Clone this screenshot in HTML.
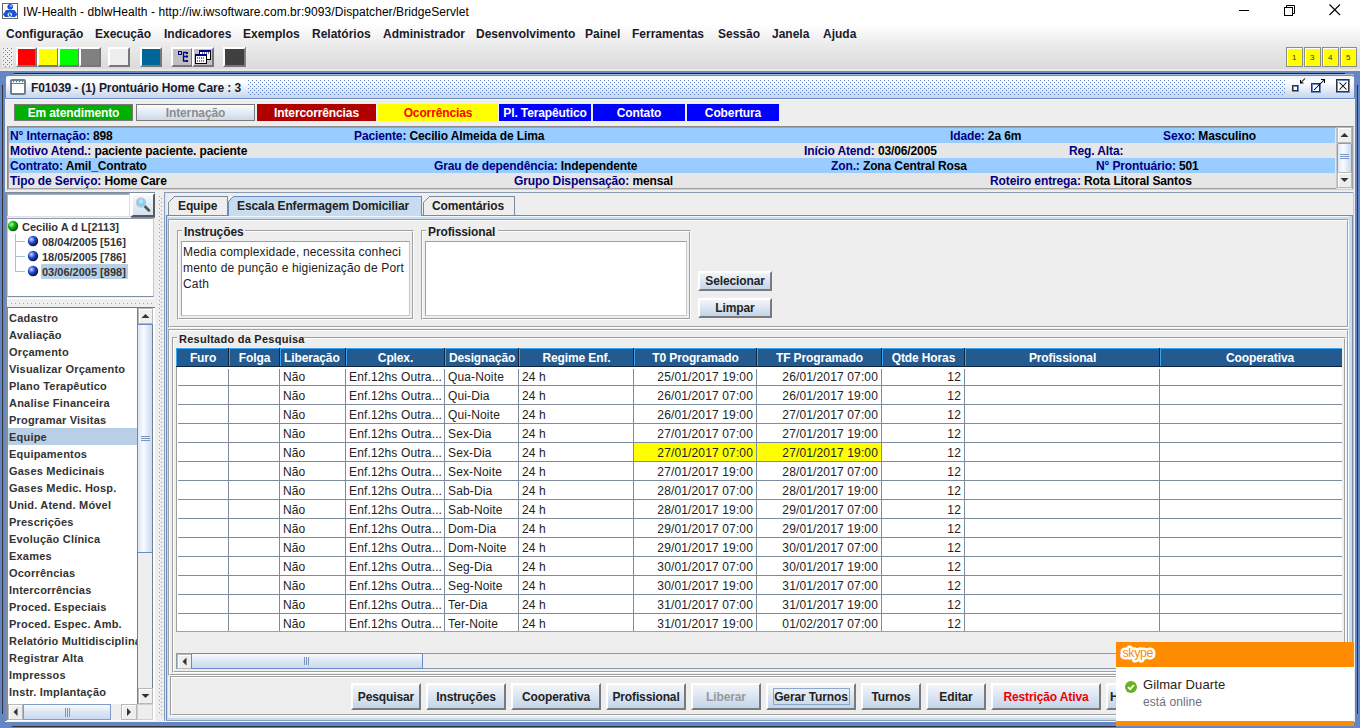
<!DOCTYPE html><html><head><meta charset="utf-8"><style>
*{box-sizing:border-box;margin:0;padding:0}
html,body{width:1360px;height:728px;overflow:hidden;background:#fff;font-family:"Liberation Sans", sans-serif;}
.a{position:absolute}
.t{position:absolute;white-space:pre;line-height:1}
.b{font-weight:bold}
</style></head><body><div class="a" style="left:0px;top:0px;width:1360px;height:22px;background:#fff"></div><svg class="a" style="left:0;top:0" width="22" height="22" viewBox="0 0 22 22">
<rect x="2.5" y="3.5" width="15" height="15" fill="#fff" stroke="#666" stroke-width="1"/>
<circle cx="10.2" cy="6.7" r="2.8" fill="#1a4fd0"/><circle cx="11" cy="6" r="1" fill="#9cd0ff"/>
<path d="M6 10 H14.5 L17.5 14.5 L15 17 H5 L3 14.5 Z" fill="#1f52d6"/>
<circle cx="9.8" cy="14.6" r="2.2" fill="#fff"/><path d="M9.5 13 V15.2 H11" stroke="#0a9a20" stroke-width="1.4" fill="none"/>
</svg><div class="t" style="left:23px;top:6px;font-size:12px;color:#000;letter-spacing:0.065px">IW-Health - dblwHealth - http://iw.iwsoftware.com.br:9093/Dispatcher/BridgeServlet</div><div class="a" style="left:1239px;top:10px;width:10px;height:1px;background:#000"></div><svg class="a" style="left:1283px;top:4px" width="13" height="12" viewBox="0 0 13 12">
<rect x="1.5" y="3.5" width="8" height="8" fill="none" stroke="#000"/>
<path d="M3.5 3.5 V1.5 H11.5 V9.5 H9.5" fill="none" stroke="#000"/></svg><svg class="a" style="left:1329px;top:4px" width="12" height="12" viewBox="0 0 12 12">
<path d="M0.5 0.5 L11 11 M11 0.5 L0.5 11" stroke="#000" stroke-width="1.1"/></svg><div class="a" style="left:0px;top:22px;width:1360px;height:48px;background:linear-gradient(#ffffff 0%,#ffffff 6%,#f6f6f6 25%,#ececec 45%,#e2e2e2 75%,#dadada 100%)"></div><div class="a" style="left:0px;top:69px;width:1360px;height:2px;background:#ece9e2"></div><div class="t b" style="left:6px;top:28px;font-size:12px;color:#1a1a2a;">Configuração</div><div class="t b" style="left:95px;top:28px;font-size:12px;color:#1a1a2a;">Execução</div><div class="t b" style="left:164px;top:28px;font-size:12px;color:#1a1a2a;">Indicadores</div><div class="t b" style="left:243px;top:28px;font-size:12px;color:#1a1a2a;">Exemplos</div><div class="t b" style="left:312px;top:28px;font-size:12px;color:#1a1a2a;">Relatórios</div><div class="t b" style="left:383px;top:28px;font-size:12px;color:#1a1a2a;">Administrador</div><div class="t b" style="left:476px;top:28px;font-size:12px;color:#1a1a2a;">Desenvolvimento</div><div class="t b" style="left:585px;top:28px;font-size:12px;color:#1a1a2a;">Painel</div><div class="t b" style="left:632px;top:28px;font-size:12px;color:#1a1a2a;">Ferramentas</div><div class="t b" style="left:718px;top:28px;font-size:12px;color:#1a1a2a;">Sessão</div><div class="t b" style="left:772px;top:28px;font-size:12px;color:#1a1a2a;">Janela</div><div class="t b" style="left:823px;top:28px;font-size:12px;color:#1a1a2a;">Ajuda</div><svg class="a" style="left:0;top:0" width="14" height="70" shape-rendering="crispEdges"><rect x="2" y="47" width="11" height="20" fill="#f4f4f4" opacity="0.6"/><rect x="3" y="48" width="1" height="1" fill="#6f7f8f"/><rect x="7" y="48" width="1" height="1" fill="#6f7f8f"/><rect x="11" y="48" width="1" height="1" fill="#6f7f8f"/><rect x="5" y="50" width="1" height="1" fill="#6f7f8f"/><rect x="9" y="50" width="1" height="1" fill="#6f7f8f"/><rect x="3" y="52" width="1" height="1" fill="#6f7f8f"/><rect x="7" y="52" width="1" height="1" fill="#6f7f8f"/><rect x="11" y="52" width="1" height="1" fill="#6f7f8f"/><rect x="5" y="54" width="1" height="1" fill="#6f7f8f"/><rect x="9" y="54" width="1" height="1" fill="#6f7f8f"/><rect x="3" y="56" width="1" height="1" fill="#6f7f8f"/><rect x="7" y="56" width="1" height="1" fill="#6f7f8f"/><rect x="11" y="56" width="1" height="1" fill="#6f7f8f"/><rect x="5" y="58" width="1" height="1" fill="#6f7f8f"/><rect x="9" y="58" width="1" height="1" fill="#6f7f8f"/><rect x="3" y="60" width="1" height="1" fill="#6f7f8f"/><rect x="7" y="60" width="1" height="1" fill="#6f7f8f"/><rect x="11" y="60" width="1" height="1" fill="#6f7f8f"/><rect x="5" y="62" width="1" height="1" fill="#6f7f8f"/><rect x="9" y="62" width="1" height="1" fill="#6f7f8f"/><rect x="3" y="64" width="1" height="1" fill="#6f7f8f"/><rect x="7" y="64" width="1" height="1" fill="#6f7f8f"/><rect x="11" y="64" width="1" height="1" fill="#6f7f8f"/><rect x="5" y="66" width="1" height="1" fill="#6f7f8f"/><rect x="9" y="66" width="1" height="1" fill="#6f7f8f"/></svg><div class="a" style="left:16px;top:47px;width:21px;height:20px;background:#ff0000;border-top:2px solid #fff;border-left:2px solid #fff;border-right:2px solid #777;border-bottom:2px solid #777"></div><div class="a" style="left:37px;top:47px;width:22px;height:20px;background:#ffff00;border-top:2px solid #fff;border-left:2px solid #fff;border-right:2px solid #777;border-bottom:2px solid #777"></div><div class="a" style="left:58px;top:47px;width:22px;height:20px;background:#00ff00;border-top:2px solid #fff;border-left:2px solid #fff;border-right:2px solid #777;border-bottom:2px solid #777"></div><div class="a" style="left:79px;top:47px;width:22px;height:20px;background:#808080;border-top:2px solid #fff;border-left:2px solid #fff;border-right:2px solid #777;border-bottom:2px solid #777"></div><div class="a" style="left:108px;top:47px;width:22px;height:20px;background:#eeeeee;border-top:2px solid #fff;border-left:2px solid #fff;border-right:2px solid #777;border-bottom:2px solid #777"></div><div class="a" style="left:140px;top:47px;width:22px;height:20px;background:#006699;border-top:2px solid #fff;border-left:2px solid #fff;border-right:2px solid #777;border-bottom:2px solid #777"></div><div class="a" style="left:171px;top:47px;width:22px;height:20px;background:#c0c0c0;border-top:2px solid #fff;border-left:2px solid #fff;border-right:2px solid #777;border-bottom:2px solid #777"></div><div class="a" style="left:192px;top:47px;width:22px;height:20px;background:#c0c0c0;border-top:2px solid #fff;border-left:2px solid #fff;border-right:2px solid #777;border-bottom:2px solid #777"></div><div class="a" style="left:223px;top:47px;width:23px;height:20px;background:#404040;border-top:2px solid #fff;border-left:2px solid #fff;border-right:2px solid #777;border-bottom:2px solid #777"></div><div class="a" style="left:245px;top:47px;width:1px;height:20px;background:#6a8ac5"></div><svg class="a" style="left:178px;top:51px" width="12" height="12" viewBox="0 0 12 12">
<rect x="0.5" y="0.5" width="3" height="3" fill="none" stroke="#000090"/>
<path d="M5 1.5 H9 M5.5 1.5 V10.5 M5 5.5 H9 M5 10 H9" stroke="#000090" stroke-width="1.3" fill="none"/>
<rect x="8" y="1" width="2" height="2" fill="#000090"/><rect x="8" y="4.5" width="2" height="2" fill="#000090"/><rect x="8" y="9" width="2" height="2" fill="#000090"/>
</svg><svg class="a" style="left:195px;top:50px" width="17" height="15" viewBox="0 0 17 15">
<rect x="4.5" y="0.5" width="11" height="9" fill="#fff" stroke="#000"/><rect x="4" y="0" width="12" height="2" fill="#000090"/>
<rect x="0.5" y="4.5" width="11" height="9" fill="#fff" stroke="#000"/><rect x="0" y="4" width="12" height="2" fill="#000090"/>
<path d="M2 8h1M4 8h1M6 8h1M8 8h1 M2 11h1M4 11h1M6 11h1M8 11h1 M7 3h1M9 3h1M11 3h1M13 3h1" stroke="#000"/>
</svg><div class="a" style="left:1286px;top:47px;width:17px;height:20px;background:#ffff00;border:1px solid #8c8c8c;box-shadow:inset 1px 1px 0 #fff"></div><div class="t" style="left:1292px;top:54px;font-size:8px;color:#333;">1</div><div class="a" style="left:1304px;top:47px;width:17px;height:20px;background:#ffff00;border:1px solid #8c8c8c;box-shadow:inset 1px 1px 0 #fff"></div><div class="t" style="left:1310px;top:54px;font-size:8px;color:#333;">3</div><div class="a" style="left:1322px;top:47px;width:17px;height:20px;background:#ffff00;border:1px solid #8c8c8c;box-shadow:inset 1px 1px 0 #fff"></div><div class="t" style="left:1328px;top:54px;font-size:8px;color:#333;">4</div><div class="a" style="left:1340px;top:47px;width:17px;height:20px;background:#ffff00;border:1px solid #8c8c8c;box-shadow:inset 1px 1px 0 #fff"></div><div class="t" style="left:1346px;top:54px;font-size:8px;color:#333;">5</div><div class="a" style="left:0px;top:71px;width:1360px;height:657px;background:#6586c4"></div><div class="a" style="left:14px;top:73px;width:1331px;height:1px;background:#222"></div><div class="a" style="left:14px;top:74px;width:1340px;height:1px;background:#a8bcd8"></div><div class="a" style="left:2px;top:85px;width:1px;height:629px;background:#333"></div><div class="a" style="left:1357px;top:85px;width:1px;height:629px;background:#333"></div><div class="a" style="left:5px;top:75px;width:1350px;height:24px;border-radius:3px 3px 0 0;background:#6a8ac5"></div><div class="a" style="left:6px;top:76px;width:1348px;height:22px;border-radius:2px 2px 0 0;background:linear-gradient(#eef3f9 0%,#ffffff 25%,#e4ecf6 60%,#c5d6ec 100%)"></div><svg class="a" style="left:10px;top:79px" width="17" height="17" viewBox="0 0 17 17">
<rect x="1" y="1" width="14" height="14" rx="1" fill="#fff" stroke="#6f7f90" stroke-width="2"/>
<path d="M2 4.5 H15" stroke="#6f7f90" stroke-width="1"/>
<path d="M3 2.6h1.2M6 2.6h1.2M9 2.6h1.2M12 2.6h1.2" stroke="#4a6fc0" stroke-width="1.2"/>
</svg><div class="t b" style="left:31px;top:82px;font-size:12px;color:#1a1a2a;letter-spacing:-0.11px">F01039 - (1) Prontuário Home Care : 3</div><svg class="a" style="left:0;top:0" width="1360" height="100" shape-rendering="crispEdges"><path d="M248 80h1v1h-1zM252 80h1v1h-1zM256 80h1v1h-1zM260 80h1v1h-1zM264 80h1v1h-1zM268 80h1v1h-1zM272 80h1v1h-1zM276 80h1v1h-1zM280 80h1v1h-1zM284 80h1v1h-1zM288 80h1v1h-1zM292 80h1v1h-1zM296 80h1v1h-1zM300 80h1v1h-1zM304 80h1v1h-1zM308 80h1v1h-1zM312 80h1v1h-1zM316 80h1v1h-1zM320 80h1v1h-1zM324 80h1v1h-1zM328 80h1v1h-1zM332 80h1v1h-1zM336 80h1v1h-1zM340 80h1v1h-1zM344 80h1v1h-1zM348 80h1v1h-1zM352 80h1v1h-1zM356 80h1v1h-1zM360 80h1v1h-1zM364 80h1v1h-1zM368 80h1v1h-1zM372 80h1v1h-1zM376 80h1v1h-1zM380 80h1v1h-1zM384 80h1v1h-1zM388 80h1v1h-1zM392 80h1v1h-1zM396 80h1v1h-1zM400 80h1v1h-1zM404 80h1v1h-1zM408 80h1v1h-1zM412 80h1v1h-1zM416 80h1v1h-1zM420 80h1v1h-1zM424 80h1v1h-1zM428 80h1v1h-1zM432 80h1v1h-1zM436 80h1v1h-1zM440 80h1v1h-1zM444 80h1v1h-1zM448 80h1v1h-1zM452 80h1v1h-1zM456 80h1v1h-1zM460 80h1v1h-1zM464 80h1v1h-1zM468 80h1v1h-1zM472 80h1v1h-1zM476 80h1v1h-1zM480 80h1v1h-1zM484 80h1v1h-1zM488 80h1v1h-1zM492 80h1v1h-1zM496 80h1v1h-1zM500 80h1v1h-1zM504 80h1v1h-1zM508 80h1v1h-1zM512 80h1v1h-1zM516 80h1v1h-1zM520 80h1v1h-1zM524 80h1v1h-1zM528 80h1v1h-1zM532 80h1v1h-1zM536 80h1v1h-1zM540 80h1v1h-1zM544 80h1v1h-1zM548 80h1v1h-1zM552 80h1v1h-1zM556 80h1v1h-1zM560 80h1v1h-1zM564 80h1v1h-1zM568 80h1v1h-1zM572 80h1v1h-1zM576 80h1v1h-1zM580 80h1v1h-1zM584 80h1v1h-1zM588 80h1v1h-1zM592 80h1v1h-1zM596 80h1v1h-1zM600 80h1v1h-1zM604 80h1v1h-1zM608 80h1v1h-1zM612 80h1v1h-1zM616 80h1v1h-1zM620 80h1v1h-1zM624 80h1v1h-1zM628 80h1v1h-1zM632 80h1v1h-1zM636 80h1v1h-1zM640 80h1v1h-1zM644 80h1v1h-1zM648 80h1v1h-1zM652 80h1v1h-1zM656 80h1v1h-1zM660 80h1v1h-1zM664 80h1v1h-1zM668 80h1v1h-1zM672 80h1v1h-1zM676 80h1v1h-1zM680 80h1v1h-1zM684 80h1v1h-1zM688 80h1v1h-1zM692 80h1v1h-1zM696 80h1v1h-1zM700 80h1v1h-1zM704 80h1v1h-1zM708 80h1v1h-1zM712 80h1v1h-1zM716 80h1v1h-1zM720 80h1v1h-1zM724 80h1v1h-1zM728 80h1v1h-1zM732 80h1v1h-1zM736 80h1v1h-1zM740 80h1v1h-1zM744 80h1v1h-1zM748 80h1v1h-1zM752 80h1v1h-1zM756 80h1v1h-1zM760 80h1v1h-1zM764 80h1v1h-1zM768 80h1v1h-1zM772 80h1v1h-1zM776 80h1v1h-1zM780 80h1v1h-1zM784 80h1v1h-1zM788 80h1v1h-1zM792 80h1v1h-1zM796 80h1v1h-1zM800 80h1v1h-1zM804 80h1v1h-1zM808 80h1v1h-1zM812 80h1v1h-1zM816 80h1v1h-1zM820 80h1v1h-1zM824 80h1v1h-1zM828 80h1v1h-1zM832 80h1v1h-1zM836 80h1v1h-1zM840 80h1v1h-1zM844 80h1v1h-1zM848 80h1v1h-1zM852 80h1v1h-1zM856 80h1v1h-1zM860 80h1v1h-1zM864 80h1v1h-1zM868 80h1v1h-1zM872 80h1v1h-1zM876 80h1v1h-1zM880 80h1v1h-1zM884 80h1v1h-1zM888 80h1v1h-1zM892 80h1v1h-1zM896 80h1v1h-1zM900 80h1v1h-1zM904 80h1v1h-1zM908 80h1v1h-1zM912 80h1v1h-1zM916 80h1v1h-1zM920 80h1v1h-1zM924 80h1v1h-1zM928 80h1v1h-1zM932 80h1v1h-1zM936 80h1v1h-1zM940 80h1v1h-1zM944 80h1v1h-1zM948 80h1v1h-1zM952 80h1v1h-1zM956 80h1v1h-1zM960 80h1v1h-1zM964 80h1v1h-1zM968 80h1v1h-1zM972 80h1v1h-1zM976 80h1v1h-1zM980 80h1v1h-1zM984 80h1v1h-1zM988 80h1v1h-1zM992 80h1v1h-1zM996 80h1v1h-1zM1000 80h1v1h-1zM1004 80h1v1h-1zM1008 80h1v1h-1zM1012 80h1v1h-1zM1016 80h1v1h-1zM1020 80h1v1h-1zM1024 80h1v1h-1zM1028 80h1v1h-1zM1032 80h1v1h-1zM1036 80h1v1h-1zM1040 80h1v1h-1zM1044 80h1v1h-1zM1048 80h1v1h-1zM1052 80h1v1h-1zM1056 80h1v1h-1zM1060 80h1v1h-1zM1064 80h1v1h-1zM1068 80h1v1h-1zM1072 80h1v1h-1zM1076 80h1v1h-1zM1080 80h1v1h-1zM1084 80h1v1h-1zM1088 80h1v1h-1zM1092 80h1v1h-1zM1096 80h1v1h-1zM1100 80h1v1h-1zM1104 80h1v1h-1zM1108 80h1v1h-1zM1112 80h1v1h-1zM1116 80h1v1h-1zM1120 80h1v1h-1zM1124 80h1v1h-1zM1128 80h1v1h-1zM1132 80h1v1h-1zM1136 80h1v1h-1zM1140 80h1v1h-1zM1144 80h1v1h-1zM1148 80h1v1h-1zM1152 80h1v1h-1zM1156 80h1v1h-1zM1160 80h1v1h-1zM1164 80h1v1h-1zM1168 80h1v1h-1zM1172 80h1v1h-1zM1176 80h1v1h-1zM1180 80h1v1h-1zM1184 80h1v1h-1zM1188 80h1v1h-1zM1192 80h1v1h-1zM1196 80h1v1h-1zM1200 80h1v1h-1zM1204 80h1v1h-1zM1208 80h1v1h-1zM1212 80h1v1h-1zM1216 80h1v1h-1zM1220 80h1v1h-1zM1224 80h1v1h-1zM1228 80h1v1h-1zM1232 80h1v1h-1zM1236 80h1v1h-1zM1240 80h1v1h-1zM1244 80h1v1h-1zM1248 80h1v1h-1zM1252 80h1v1h-1zM1256 80h1v1h-1zM1260 80h1v1h-1zM1264 80h1v1h-1zM1268 80h1v1h-1zM1272 80h1v1h-1zM1276 80h1v1h-1zM1280 80h1v1h-1zM1284 80h1v1h-1zM250 82h1v1h-1zM254 82h1v1h-1zM258 82h1v1h-1zM262 82h1v1h-1zM266 82h1v1h-1zM270 82h1v1h-1zM274 82h1v1h-1zM278 82h1v1h-1zM282 82h1v1h-1zM286 82h1v1h-1zM290 82h1v1h-1zM294 82h1v1h-1zM298 82h1v1h-1zM302 82h1v1h-1zM306 82h1v1h-1zM310 82h1v1h-1zM314 82h1v1h-1zM318 82h1v1h-1zM322 82h1v1h-1zM326 82h1v1h-1zM330 82h1v1h-1zM334 82h1v1h-1zM338 82h1v1h-1zM342 82h1v1h-1zM346 82h1v1h-1zM350 82h1v1h-1zM354 82h1v1h-1zM358 82h1v1h-1zM362 82h1v1h-1zM366 82h1v1h-1zM370 82h1v1h-1zM374 82h1v1h-1zM378 82h1v1h-1zM382 82h1v1h-1zM386 82h1v1h-1zM390 82h1v1h-1zM394 82h1v1h-1zM398 82h1v1h-1zM402 82h1v1h-1zM406 82h1v1h-1zM410 82h1v1h-1zM414 82h1v1h-1zM418 82h1v1h-1zM422 82h1v1h-1zM426 82h1v1h-1zM430 82h1v1h-1zM434 82h1v1h-1zM438 82h1v1h-1zM442 82h1v1h-1zM446 82h1v1h-1zM450 82h1v1h-1zM454 82h1v1h-1zM458 82h1v1h-1zM462 82h1v1h-1zM466 82h1v1h-1zM470 82h1v1h-1zM474 82h1v1h-1zM478 82h1v1h-1zM482 82h1v1h-1zM486 82h1v1h-1zM490 82h1v1h-1zM494 82h1v1h-1zM498 82h1v1h-1zM502 82h1v1h-1zM506 82h1v1h-1zM510 82h1v1h-1zM514 82h1v1h-1zM518 82h1v1h-1zM522 82h1v1h-1zM526 82h1v1h-1zM530 82h1v1h-1zM534 82h1v1h-1zM538 82h1v1h-1zM542 82h1v1h-1zM546 82h1v1h-1zM550 82h1v1h-1zM554 82h1v1h-1zM558 82h1v1h-1zM562 82h1v1h-1zM566 82h1v1h-1zM570 82h1v1h-1zM574 82h1v1h-1zM578 82h1v1h-1zM582 82h1v1h-1zM586 82h1v1h-1zM590 82h1v1h-1zM594 82h1v1h-1zM598 82h1v1h-1zM602 82h1v1h-1zM606 82h1v1h-1zM610 82h1v1h-1zM614 82h1v1h-1zM618 82h1v1h-1zM622 82h1v1h-1zM626 82h1v1h-1zM630 82h1v1h-1zM634 82h1v1h-1zM638 82h1v1h-1zM642 82h1v1h-1zM646 82h1v1h-1zM650 82h1v1h-1zM654 82h1v1h-1zM658 82h1v1h-1zM662 82h1v1h-1zM666 82h1v1h-1zM670 82h1v1h-1zM674 82h1v1h-1zM678 82h1v1h-1zM682 82h1v1h-1zM686 82h1v1h-1zM690 82h1v1h-1zM694 82h1v1h-1zM698 82h1v1h-1zM702 82h1v1h-1zM706 82h1v1h-1zM710 82h1v1h-1zM714 82h1v1h-1zM718 82h1v1h-1zM722 82h1v1h-1zM726 82h1v1h-1zM730 82h1v1h-1zM734 82h1v1h-1zM738 82h1v1h-1zM742 82h1v1h-1zM746 82h1v1h-1zM750 82h1v1h-1zM754 82h1v1h-1zM758 82h1v1h-1zM762 82h1v1h-1zM766 82h1v1h-1zM770 82h1v1h-1zM774 82h1v1h-1zM778 82h1v1h-1zM782 82h1v1h-1zM786 82h1v1h-1zM790 82h1v1h-1zM794 82h1v1h-1zM798 82h1v1h-1zM802 82h1v1h-1zM806 82h1v1h-1zM810 82h1v1h-1zM814 82h1v1h-1zM818 82h1v1h-1zM822 82h1v1h-1zM826 82h1v1h-1zM830 82h1v1h-1zM834 82h1v1h-1zM838 82h1v1h-1zM842 82h1v1h-1zM846 82h1v1h-1zM850 82h1v1h-1zM854 82h1v1h-1zM858 82h1v1h-1zM862 82h1v1h-1zM866 82h1v1h-1zM870 82h1v1h-1zM874 82h1v1h-1zM878 82h1v1h-1zM882 82h1v1h-1zM886 82h1v1h-1zM890 82h1v1h-1zM894 82h1v1h-1zM898 82h1v1h-1zM902 82h1v1h-1zM906 82h1v1h-1zM910 82h1v1h-1zM914 82h1v1h-1zM918 82h1v1h-1zM922 82h1v1h-1zM926 82h1v1h-1zM930 82h1v1h-1zM934 82h1v1h-1zM938 82h1v1h-1zM942 82h1v1h-1zM946 82h1v1h-1zM950 82h1v1h-1zM954 82h1v1h-1zM958 82h1v1h-1zM962 82h1v1h-1zM966 82h1v1h-1zM970 82h1v1h-1zM974 82h1v1h-1zM978 82h1v1h-1zM982 82h1v1h-1zM986 82h1v1h-1zM990 82h1v1h-1zM994 82h1v1h-1zM998 82h1v1h-1zM1002 82h1v1h-1zM1006 82h1v1h-1zM1010 82h1v1h-1zM1014 82h1v1h-1zM1018 82h1v1h-1zM1022 82h1v1h-1zM1026 82h1v1h-1zM1030 82h1v1h-1zM1034 82h1v1h-1zM1038 82h1v1h-1zM1042 82h1v1h-1zM1046 82h1v1h-1zM1050 82h1v1h-1zM1054 82h1v1h-1zM1058 82h1v1h-1zM1062 82h1v1h-1zM1066 82h1v1h-1zM1070 82h1v1h-1zM1074 82h1v1h-1zM1078 82h1v1h-1zM1082 82h1v1h-1zM1086 82h1v1h-1zM1090 82h1v1h-1zM1094 82h1v1h-1zM1098 82h1v1h-1zM1102 82h1v1h-1zM1106 82h1v1h-1zM1110 82h1v1h-1zM1114 82h1v1h-1zM1118 82h1v1h-1zM1122 82h1v1h-1zM1126 82h1v1h-1zM1130 82h1v1h-1zM1134 82h1v1h-1zM1138 82h1v1h-1zM1142 82h1v1h-1zM1146 82h1v1h-1zM1150 82h1v1h-1zM1154 82h1v1h-1zM1158 82h1v1h-1zM1162 82h1v1h-1zM1166 82h1v1h-1zM1170 82h1v1h-1zM1174 82h1v1h-1zM1178 82h1v1h-1zM1182 82h1v1h-1zM1186 82h1v1h-1zM1190 82h1v1h-1zM1194 82h1v1h-1zM1198 82h1v1h-1zM1202 82h1v1h-1zM1206 82h1v1h-1zM1210 82h1v1h-1zM1214 82h1v1h-1zM1218 82h1v1h-1zM1222 82h1v1h-1zM1226 82h1v1h-1zM1230 82h1v1h-1zM1234 82h1v1h-1zM1238 82h1v1h-1zM1242 82h1v1h-1zM1246 82h1v1h-1zM1250 82h1v1h-1zM1254 82h1v1h-1zM1258 82h1v1h-1zM1262 82h1v1h-1zM1266 82h1v1h-1zM1270 82h1v1h-1zM1274 82h1v1h-1zM1278 82h1v1h-1zM1282 82h1v1h-1zM248 84h1v1h-1zM252 84h1v1h-1zM256 84h1v1h-1zM260 84h1v1h-1zM264 84h1v1h-1zM268 84h1v1h-1zM272 84h1v1h-1zM276 84h1v1h-1zM280 84h1v1h-1zM284 84h1v1h-1zM288 84h1v1h-1zM292 84h1v1h-1zM296 84h1v1h-1zM300 84h1v1h-1zM304 84h1v1h-1zM308 84h1v1h-1zM312 84h1v1h-1zM316 84h1v1h-1zM320 84h1v1h-1zM324 84h1v1h-1zM328 84h1v1h-1zM332 84h1v1h-1zM336 84h1v1h-1zM340 84h1v1h-1zM344 84h1v1h-1zM348 84h1v1h-1zM352 84h1v1h-1zM356 84h1v1h-1zM360 84h1v1h-1zM364 84h1v1h-1zM368 84h1v1h-1zM372 84h1v1h-1zM376 84h1v1h-1zM380 84h1v1h-1zM384 84h1v1h-1zM388 84h1v1h-1zM392 84h1v1h-1zM396 84h1v1h-1zM400 84h1v1h-1zM404 84h1v1h-1zM408 84h1v1h-1zM412 84h1v1h-1zM416 84h1v1h-1zM420 84h1v1h-1zM424 84h1v1h-1zM428 84h1v1h-1zM432 84h1v1h-1zM436 84h1v1h-1zM440 84h1v1h-1zM444 84h1v1h-1zM448 84h1v1h-1zM452 84h1v1h-1zM456 84h1v1h-1zM460 84h1v1h-1zM464 84h1v1h-1zM468 84h1v1h-1zM472 84h1v1h-1zM476 84h1v1h-1zM480 84h1v1h-1zM484 84h1v1h-1zM488 84h1v1h-1zM492 84h1v1h-1zM496 84h1v1h-1zM500 84h1v1h-1zM504 84h1v1h-1zM508 84h1v1h-1zM512 84h1v1h-1zM516 84h1v1h-1zM520 84h1v1h-1zM524 84h1v1h-1zM528 84h1v1h-1zM532 84h1v1h-1zM536 84h1v1h-1zM540 84h1v1h-1zM544 84h1v1h-1zM548 84h1v1h-1zM552 84h1v1h-1zM556 84h1v1h-1zM560 84h1v1h-1zM564 84h1v1h-1zM568 84h1v1h-1zM572 84h1v1h-1zM576 84h1v1h-1zM580 84h1v1h-1zM584 84h1v1h-1zM588 84h1v1h-1zM592 84h1v1h-1zM596 84h1v1h-1zM600 84h1v1h-1zM604 84h1v1h-1zM608 84h1v1h-1zM612 84h1v1h-1zM616 84h1v1h-1zM620 84h1v1h-1zM624 84h1v1h-1zM628 84h1v1h-1zM632 84h1v1h-1zM636 84h1v1h-1zM640 84h1v1h-1zM644 84h1v1h-1zM648 84h1v1h-1zM652 84h1v1h-1zM656 84h1v1h-1zM660 84h1v1h-1zM664 84h1v1h-1zM668 84h1v1h-1zM672 84h1v1h-1zM676 84h1v1h-1zM680 84h1v1h-1zM684 84h1v1h-1zM688 84h1v1h-1zM692 84h1v1h-1zM696 84h1v1h-1zM700 84h1v1h-1zM704 84h1v1h-1zM708 84h1v1h-1zM712 84h1v1h-1zM716 84h1v1h-1zM720 84h1v1h-1zM724 84h1v1h-1zM728 84h1v1h-1zM732 84h1v1h-1zM736 84h1v1h-1zM740 84h1v1h-1zM744 84h1v1h-1zM748 84h1v1h-1zM752 84h1v1h-1zM756 84h1v1h-1zM760 84h1v1h-1zM764 84h1v1h-1zM768 84h1v1h-1zM772 84h1v1h-1zM776 84h1v1h-1zM780 84h1v1h-1zM784 84h1v1h-1zM788 84h1v1h-1zM792 84h1v1h-1zM796 84h1v1h-1zM800 84h1v1h-1zM804 84h1v1h-1zM808 84h1v1h-1zM812 84h1v1h-1zM816 84h1v1h-1zM820 84h1v1h-1zM824 84h1v1h-1zM828 84h1v1h-1zM832 84h1v1h-1zM836 84h1v1h-1zM840 84h1v1h-1zM844 84h1v1h-1zM848 84h1v1h-1zM852 84h1v1h-1zM856 84h1v1h-1zM860 84h1v1h-1zM864 84h1v1h-1zM868 84h1v1h-1zM872 84h1v1h-1zM876 84h1v1h-1zM880 84h1v1h-1zM884 84h1v1h-1zM888 84h1v1h-1zM892 84h1v1h-1zM896 84h1v1h-1zM900 84h1v1h-1zM904 84h1v1h-1zM908 84h1v1h-1zM912 84h1v1h-1zM916 84h1v1h-1zM920 84h1v1h-1zM924 84h1v1h-1zM928 84h1v1h-1zM932 84h1v1h-1zM936 84h1v1h-1zM940 84h1v1h-1zM944 84h1v1h-1zM948 84h1v1h-1zM952 84h1v1h-1zM956 84h1v1h-1zM960 84h1v1h-1zM964 84h1v1h-1zM968 84h1v1h-1zM972 84h1v1h-1zM976 84h1v1h-1zM980 84h1v1h-1zM984 84h1v1h-1zM988 84h1v1h-1zM992 84h1v1h-1zM996 84h1v1h-1zM1000 84h1v1h-1zM1004 84h1v1h-1zM1008 84h1v1h-1zM1012 84h1v1h-1zM1016 84h1v1h-1zM1020 84h1v1h-1zM1024 84h1v1h-1zM1028 84h1v1h-1zM1032 84h1v1h-1zM1036 84h1v1h-1zM1040 84h1v1h-1zM1044 84h1v1h-1zM1048 84h1v1h-1zM1052 84h1v1h-1zM1056 84h1v1h-1zM1060 84h1v1h-1zM1064 84h1v1h-1zM1068 84h1v1h-1zM1072 84h1v1h-1zM1076 84h1v1h-1zM1080 84h1v1h-1zM1084 84h1v1h-1zM1088 84h1v1h-1zM1092 84h1v1h-1zM1096 84h1v1h-1zM1100 84h1v1h-1zM1104 84h1v1h-1zM1108 84h1v1h-1zM1112 84h1v1h-1zM1116 84h1v1h-1zM1120 84h1v1h-1zM1124 84h1v1h-1zM1128 84h1v1h-1zM1132 84h1v1h-1zM1136 84h1v1h-1zM1140 84h1v1h-1zM1144 84h1v1h-1zM1148 84h1v1h-1zM1152 84h1v1h-1zM1156 84h1v1h-1zM1160 84h1v1h-1zM1164 84h1v1h-1zM1168 84h1v1h-1zM1172 84h1v1h-1zM1176 84h1v1h-1zM1180 84h1v1h-1zM1184 84h1v1h-1zM1188 84h1v1h-1zM1192 84h1v1h-1zM1196 84h1v1h-1zM1200 84h1v1h-1zM1204 84h1v1h-1zM1208 84h1v1h-1zM1212 84h1v1h-1zM1216 84h1v1h-1zM1220 84h1v1h-1zM1224 84h1v1h-1zM1228 84h1v1h-1zM1232 84h1v1h-1zM1236 84h1v1h-1zM1240 84h1v1h-1zM1244 84h1v1h-1zM1248 84h1v1h-1zM1252 84h1v1h-1zM1256 84h1v1h-1zM1260 84h1v1h-1zM1264 84h1v1h-1zM1268 84h1v1h-1zM1272 84h1v1h-1zM1276 84h1v1h-1zM1280 84h1v1h-1zM1284 84h1v1h-1zM250 86h1v1h-1zM254 86h1v1h-1zM258 86h1v1h-1zM262 86h1v1h-1zM266 86h1v1h-1zM270 86h1v1h-1zM274 86h1v1h-1zM278 86h1v1h-1zM282 86h1v1h-1zM286 86h1v1h-1zM290 86h1v1h-1zM294 86h1v1h-1zM298 86h1v1h-1zM302 86h1v1h-1zM306 86h1v1h-1zM310 86h1v1h-1zM314 86h1v1h-1zM318 86h1v1h-1zM322 86h1v1h-1zM326 86h1v1h-1zM330 86h1v1h-1zM334 86h1v1h-1zM338 86h1v1h-1zM342 86h1v1h-1zM346 86h1v1h-1zM350 86h1v1h-1zM354 86h1v1h-1zM358 86h1v1h-1zM362 86h1v1h-1zM366 86h1v1h-1zM370 86h1v1h-1zM374 86h1v1h-1zM378 86h1v1h-1zM382 86h1v1h-1zM386 86h1v1h-1zM390 86h1v1h-1zM394 86h1v1h-1zM398 86h1v1h-1zM402 86h1v1h-1zM406 86h1v1h-1zM410 86h1v1h-1zM414 86h1v1h-1zM418 86h1v1h-1zM422 86h1v1h-1zM426 86h1v1h-1zM430 86h1v1h-1zM434 86h1v1h-1zM438 86h1v1h-1zM442 86h1v1h-1zM446 86h1v1h-1zM450 86h1v1h-1zM454 86h1v1h-1zM458 86h1v1h-1zM462 86h1v1h-1zM466 86h1v1h-1zM470 86h1v1h-1zM474 86h1v1h-1zM478 86h1v1h-1zM482 86h1v1h-1zM486 86h1v1h-1zM490 86h1v1h-1zM494 86h1v1h-1zM498 86h1v1h-1zM502 86h1v1h-1zM506 86h1v1h-1zM510 86h1v1h-1zM514 86h1v1h-1zM518 86h1v1h-1zM522 86h1v1h-1zM526 86h1v1h-1zM530 86h1v1h-1zM534 86h1v1h-1zM538 86h1v1h-1zM542 86h1v1h-1zM546 86h1v1h-1zM550 86h1v1h-1zM554 86h1v1h-1zM558 86h1v1h-1zM562 86h1v1h-1zM566 86h1v1h-1zM570 86h1v1h-1zM574 86h1v1h-1zM578 86h1v1h-1zM582 86h1v1h-1zM586 86h1v1h-1zM590 86h1v1h-1zM594 86h1v1h-1zM598 86h1v1h-1zM602 86h1v1h-1zM606 86h1v1h-1zM610 86h1v1h-1zM614 86h1v1h-1zM618 86h1v1h-1zM622 86h1v1h-1zM626 86h1v1h-1zM630 86h1v1h-1zM634 86h1v1h-1zM638 86h1v1h-1zM642 86h1v1h-1zM646 86h1v1h-1zM650 86h1v1h-1zM654 86h1v1h-1zM658 86h1v1h-1zM662 86h1v1h-1zM666 86h1v1h-1zM670 86h1v1h-1zM674 86h1v1h-1zM678 86h1v1h-1zM682 86h1v1h-1zM686 86h1v1h-1zM690 86h1v1h-1zM694 86h1v1h-1zM698 86h1v1h-1zM702 86h1v1h-1zM706 86h1v1h-1zM710 86h1v1h-1zM714 86h1v1h-1zM718 86h1v1h-1zM722 86h1v1h-1zM726 86h1v1h-1zM730 86h1v1h-1zM734 86h1v1h-1zM738 86h1v1h-1zM742 86h1v1h-1zM746 86h1v1h-1zM750 86h1v1h-1zM754 86h1v1h-1zM758 86h1v1h-1zM762 86h1v1h-1zM766 86h1v1h-1zM770 86h1v1h-1zM774 86h1v1h-1zM778 86h1v1h-1zM782 86h1v1h-1zM786 86h1v1h-1zM790 86h1v1h-1zM794 86h1v1h-1zM798 86h1v1h-1zM802 86h1v1h-1zM806 86h1v1h-1zM810 86h1v1h-1zM814 86h1v1h-1zM818 86h1v1h-1zM822 86h1v1h-1zM826 86h1v1h-1zM830 86h1v1h-1zM834 86h1v1h-1zM838 86h1v1h-1zM842 86h1v1h-1zM846 86h1v1h-1zM850 86h1v1h-1zM854 86h1v1h-1zM858 86h1v1h-1zM862 86h1v1h-1zM866 86h1v1h-1zM870 86h1v1h-1zM874 86h1v1h-1zM878 86h1v1h-1zM882 86h1v1h-1zM886 86h1v1h-1zM890 86h1v1h-1zM894 86h1v1h-1zM898 86h1v1h-1zM902 86h1v1h-1zM906 86h1v1h-1zM910 86h1v1h-1zM914 86h1v1h-1zM918 86h1v1h-1zM922 86h1v1h-1zM926 86h1v1h-1zM930 86h1v1h-1zM934 86h1v1h-1zM938 86h1v1h-1zM942 86h1v1h-1zM946 86h1v1h-1zM950 86h1v1h-1zM954 86h1v1h-1zM958 86h1v1h-1zM962 86h1v1h-1zM966 86h1v1h-1zM970 86h1v1h-1zM974 86h1v1h-1zM978 86h1v1h-1zM982 86h1v1h-1zM986 86h1v1h-1zM990 86h1v1h-1zM994 86h1v1h-1zM998 86h1v1h-1zM1002 86h1v1h-1zM1006 86h1v1h-1zM1010 86h1v1h-1zM1014 86h1v1h-1zM1018 86h1v1h-1zM1022 86h1v1h-1zM1026 86h1v1h-1zM1030 86h1v1h-1zM1034 86h1v1h-1zM1038 86h1v1h-1zM1042 86h1v1h-1zM1046 86h1v1h-1zM1050 86h1v1h-1zM1054 86h1v1h-1zM1058 86h1v1h-1zM1062 86h1v1h-1zM1066 86h1v1h-1zM1070 86h1v1h-1zM1074 86h1v1h-1zM1078 86h1v1h-1zM1082 86h1v1h-1zM1086 86h1v1h-1zM1090 86h1v1h-1zM1094 86h1v1h-1zM1098 86h1v1h-1zM1102 86h1v1h-1zM1106 86h1v1h-1zM1110 86h1v1h-1zM1114 86h1v1h-1zM1118 86h1v1h-1zM1122 86h1v1h-1zM1126 86h1v1h-1zM1130 86h1v1h-1zM1134 86h1v1h-1zM1138 86h1v1h-1zM1142 86h1v1h-1zM1146 86h1v1h-1zM1150 86h1v1h-1zM1154 86h1v1h-1zM1158 86h1v1h-1zM1162 86h1v1h-1zM1166 86h1v1h-1zM1170 86h1v1h-1zM1174 86h1v1h-1zM1178 86h1v1h-1zM1182 86h1v1h-1zM1186 86h1v1h-1zM1190 86h1v1h-1zM1194 86h1v1h-1zM1198 86h1v1h-1zM1202 86h1v1h-1zM1206 86h1v1h-1zM1210 86h1v1h-1zM1214 86h1v1h-1zM1218 86h1v1h-1zM1222 86h1v1h-1zM1226 86h1v1h-1zM1230 86h1v1h-1zM1234 86h1v1h-1zM1238 86h1v1h-1zM1242 86h1v1h-1zM1246 86h1v1h-1zM1250 86h1v1h-1zM1254 86h1v1h-1zM1258 86h1v1h-1zM1262 86h1v1h-1zM1266 86h1v1h-1zM1270 86h1v1h-1zM1274 86h1v1h-1zM1278 86h1v1h-1zM1282 86h1v1h-1zM248 88h1v1h-1zM252 88h1v1h-1zM256 88h1v1h-1zM260 88h1v1h-1zM264 88h1v1h-1zM268 88h1v1h-1zM272 88h1v1h-1zM276 88h1v1h-1zM280 88h1v1h-1zM284 88h1v1h-1zM288 88h1v1h-1zM292 88h1v1h-1zM296 88h1v1h-1zM300 88h1v1h-1zM304 88h1v1h-1zM308 88h1v1h-1zM312 88h1v1h-1zM316 88h1v1h-1zM320 88h1v1h-1zM324 88h1v1h-1zM328 88h1v1h-1zM332 88h1v1h-1zM336 88h1v1h-1zM340 88h1v1h-1zM344 88h1v1h-1zM348 88h1v1h-1zM352 88h1v1h-1zM356 88h1v1h-1zM360 88h1v1h-1zM364 88h1v1h-1zM368 88h1v1h-1zM372 88h1v1h-1zM376 88h1v1h-1zM380 88h1v1h-1zM384 88h1v1h-1zM388 88h1v1h-1zM392 88h1v1h-1zM396 88h1v1h-1zM400 88h1v1h-1zM404 88h1v1h-1zM408 88h1v1h-1zM412 88h1v1h-1zM416 88h1v1h-1zM420 88h1v1h-1zM424 88h1v1h-1zM428 88h1v1h-1zM432 88h1v1h-1zM436 88h1v1h-1zM440 88h1v1h-1zM444 88h1v1h-1zM448 88h1v1h-1zM452 88h1v1h-1zM456 88h1v1h-1zM460 88h1v1h-1zM464 88h1v1h-1zM468 88h1v1h-1zM472 88h1v1h-1zM476 88h1v1h-1zM480 88h1v1h-1zM484 88h1v1h-1zM488 88h1v1h-1zM492 88h1v1h-1zM496 88h1v1h-1zM500 88h1v1h-1zM504 88h1v1h-1zM508 88h1v1h-1zM512 88h1v1h-1zM516 88h1v1h-1zM520 88h1v1h-1zM524 88h1v1h-1zM528 88h1v1h-1zM532 88h1v1h-1zM536 88h1v1h-1zM540 88h1v1h-1zM544 88h1v1h-1zM548 88h1v1h-1zM552 88h1v1h-1zM556 88h1v1h-1zM560 88h1v1h-1zM564 88h1v1h-1zM568 88h1v1h-1zM572 88h1v1h-1zM576 88h1v1h-1zM580 88h1v1h-1zM584 88h1v1h-1zM588 88h1v1h-1zM592 88h1v1h-1zM596 88h1v1h-1zM600 88h1v1h-1zM604 88h1v1h-1zM608 88h1v1h-1zM612 88h1v1h-1zM616 88h1v1h-1zM620 88h1v1h-1zM624 88h1v1h-1zM628 88h1v1h-1zM632 88h1v1h-1zM636 88h1v1h-1zM640 88h1v1h-1zM644 88h1v1h-1zM648 88h1v1h-1zM652 88h1v1h-1zM656 88h1v1h-1zM660 88h1v1h-1zM664 88h1v1h-1zM668 88h1v1h-1zM672 88h1v1h-1zM676 88h1v1h-1zM680 88h1v1h-1zM684 88h1v1h-1zM688 88h1v1h-1zM692 88h1v1h-1zM696 88h1v1h-1zM700 88h1v1h-1zM704 88h1v1h-1zM708 88h1v1h-1zM712 88h1v1h-1zM716 88h1v1h-1zM720 88h1v1h-1zM724 88h1v1h-1zM728 88h1v1h-1zM732 88h1v1h-1zM736 88h1v1h-1zM740 88h1v1h-1zM744 88h1v1h-1zM748 88h1v1h-1zM752 88h1v1h-1zM756 88h1v1h-1zM760 88h1v1h-1zM764 88h1v1h-1zM768 88h1v1h-1zM772 88h1v1h-1zM776 88h1v1h-1zM780 88h1v1h-1zM784 88h1v1h-1zM788 88h1v1h-1zM792 88h1v1h-1zM796 88h1v1h-1zM800 88h1v1h-1zM804 88h1v1h-1zM808 88h1v1h-1zM812 88h1v1h-1zM816 88h1v1h-1zM820 88h1v1h-1zM824 88h1v1h-1zM828 88h1v1h-1zM832 88h1v1h-1zM836 88h1v1h-1zM840 88h1v1h-1zM844 88h1v1h-1zM848 88h1v1h-1zM852 88h1v1h-1zM856 88h1v1h-1zM860 88h1v1h-1zM864 88h1v1h-1zM868 88h1v1h-1zM872 88h1v1h-1zM876 88h1v1h-1zM880 88h1v1h-1zM884 88h1v1h-1zM888 88h1v1h-1zM892 88h1v1h-1zM896 88h1v1h-1zM900 88h1v1h-1zM904 88h1v1h-1zM908 88h1v1h-1zM912 88h1v1h-1zM916 88h1v1h-1zM920 88h1v1h-1zM924 88h1v1h-1zM928 88h1v1h-1zM932 88h1v1h-1zM936 88h1v1h-1zM940 88h1v1h-1zM944 88h1v1h-1zM948 88h1v1h-1zM952 88h1v1h-1zM956 88h1v1h-1zM960 88h1v1h-1zM964 88h1v1h-1zM968 88h1v1h-1zM972 88h1v1h-1zM976 88h1v1h-1zM980 88h1v1h-1zM984 88h1v1h-1zM988 88h1v1h-1zM992 88h1v1h-1zM996 88h1v1h-1zM1000 88h1v1h-1zM1004 88h1v1h-1zM1008 88h1v1h-1zM1012 88h1v1h-1zM1016 88h1v1h-1zM1020 88h1v1h-1zM1024 88h1v1h-1zM1028 88h1v1h-1zM1032 88h1v1h-1zM1036 88h1v1h-1zM1040 88h1v1h-1zM1044 88h1v1h-1zM1048 88h1v1h-1zM1052 88h1v1h-1zM1056 88h1v1h-1zM1060 88h1v1h-1zM1064 88h1v1h-1zM1068 88h1v1h-1zM1072 88h1v1h-1zM1076 88h1v1h-1zM1080 88h1v1h-1zM1084 88h1v1h-1zM1088 88h1v1h-1zM1092 88h1v1h-1zM1096 88h1v1h-1zM1100 88h1v1h-1zM1104 88h1v1h-1zM1108 88h1v1h-1zM1112 88h1v1h-1zM1116 88h1v1h-1zM1120 88h1v1h-1zM1124 88h1v1h-1zM1128 88h1v1h-1zM1132 88h1v1h-1zM1136 88h1v1h-1zM1140 88h1v1h-1zM1144 88h1v1h-1zM1148 88h1v1h-1zM1152 88h1v1h-1zM1156 88h1v1h-1zM1160 88h1v1h-1zM1164 88h1v1h-1zM1168 88h1v1h-1zM1172 88h1v1h-1zM1176 88h1v1h-1zM1180 88h1v1h-1zM1184 88h1v1h-1zM1188 88h1v1h-1zM1192 88h1v1h-1zM1196 88h1v1h-1zM1200 88h1v1h-1zM1204 88h1v1h-1zM1208 88h1v1h-1zM1212 88h1v1h-1zM1216 88h1v1h-1zM1220 88h1v1h-1zM1224 88h1v1h-1zM1228 88h1v1h-1zM1232 88h1v1h-1zM1236 88h1v1h-1zM1240 88h1v1h-1zM1244 88h1v1h-1zM1248 88h1v1h-1zM1252 88h1v1h-1zM1256 88h1v1h-1zM1260 88h1v1h-1zM1264 88h1v1h-1zM1268 88h1v1h-1zM1272 88h1v1h-1zM1276 88h1v1h-1zM1280 88h1v1h-1zM1284 88h1v1h-1zM250 90h1v1h-1zM254 90h1v1h-1zM258 90h1v1h-1zM262 90h1v1h-1zM266 90h1v1h-1zM270 90h1v1h-1zM274 90h1v1h-1zM278 90h1v1h-1zM282 90h1v1h-1zM286 90h1v1h-1zM290 90h1v1h-1zM294 90h1v1h-1zM298 90h1v1h-1zM302 90h1v1h-1zM306 90h1v1h-1zM310 90h1v1h-1zM314 90h1v1h-1zM318 90h1v1h-1zM322 90h1v1h-1zM326 90h1v1h-1zM330 90h1v1h-1zM334 90h1v1h-1zM338 90h1v1h-1zM342 90h1v1h-1zM346 90h1v1h-1zM350 90h1v1h-1zM354 90h1v1h-1zM358 90h1v1h-1zM362 90h1v1h-1zM366 90h1v1h-1zM370 90h1v1h-1zM374 90h1v1h-1zM378 90h1v1h-1zM382 90h1v1h-1zM386 90h1v1h-1zM390 90h1v1h-1zM394 90h1v1h-1zM398 90h1v1h-1zM402 90h1v1h-1zM406 90h1v1h-1zM410 90h1v1h-1zM414 90h1v1h-1zM418 90h1v1h-1zM422 90h1v1h-1zM426 90h1v1h-1zM430 90h1v1h-1zM434 90h1v1h-1zM438 90h1v1h-1zM442 90h1v1h-1zM446 90h1v1h-1zM450 90h1v1h-1zM454 90h1v1h-1zM458 90h1v1h-1zM462 90h1v1h-1zM466 90h1v1h-1zM470 90h1v1h-1zM474 90h1v1h-1zM478 90h1v1h-1zM482 90h1v1h-1zM486 90h1v1h-1zM490 90h1v1h-1zM494 90h1v1h-1zM498 90h1v1h-1zM502 90h1v1h-1zM506 90h1v1h-1zM510 90h1v1h-1zM514 90h1v1h-1zM518 90h1v1h-1zM522 90h1v1h-1zM526 90h1v1h-1zM530 90h1v1h-1zM534 90h1v1h-1zM538 90h1v1h-1zM542 90h1v1h-1zM546 90h1v1h-1zM550 90h1v1h-1zM554 90h1v1h-1zM558 90h1v1h-1zM562 90h1v1h-1zM566 90h1v1h-1zM570 90h1v1h-1zM574 90h1v1h-1zM578 90h1v1h-1zM582 90h1v1h-1zM586 90h1v1h-1zM590 90h1v1h-1zM594 90h1v1h-1zM598 90h1v1h-1zM602 90h1v1h-1zM606 90h1v1h-1zM610 90h1v1h-1zM614 90h1v1h-1zM618 90h1v1h-1zM622 90h1v1h-1zM626 90h1v1h-1zM630 90h1v1h-1zM634 90h1v1h-1zM638 90h1v1h-1zM642 90h1v1h-1zM646 90h1v1h-1zM650 90h1v1h-1zM654 90h1v1h-1zM658 90h1v1h-1zM662 90h1v1h-1zM666 90h1v1h-1zM670 90h1v1h-1zM674 90h1v1h-1zM678 90h1v1h-1zM682 90h1v1h-1zM686 90h1v1h-1zM690 90h1v1h-1zM694 90h1v1h-1zM698 90h1v1h-1zM702 90h1v1h-1zM706 90h1v1h-1zM710 90h1v1h-1zM714 90h1v1h-1zM718 90h1v1h-1zM722 90h1v1h-1zM726 90h1v1h-1zM730 90h1v1h-1zM734 90h1v1h-1zM738 90h1v1h-1zM742 90h1v1h-1zM746 90h1v1h-1zM750 90h1v1h-1zM754 90h1v1h-1zM758 90h1v1h-1zM762 90h1v1h-1zM766 90h1v1h-1zM770 90h1v1h-1zM774 90h1v1h-1zM778 90h1v1h-1zM782 90h1v1h-1zM786 90h1v1h-1zM790 90h1v1h-1zM794 90h1v1h-1zM798 90h1v1h-1zM802 90h1v1h-1zM806 90h1v1h-1zM810 90h1v1h-1zM814 90h1v1h-1zM818 90h1v1h-1zM822 90h1v1h-1zM826 90h1v1h-1zM830 90h1v1h-1zM834 90h1v1h-1zM838 90h1v1h-1zM842 90h1v1h-1zM846 90h1v1h-1zM850 90h1v1h-1zM854 90h1v1h-1zM858 90h1v1h-1zM862 90h1v1h-1zM866 90h1v1h-1zM870 90h1v1h-1zM874 90h1v1h-1zM878 90h1v1h-1zM882 90h1v1h-1zM886 90h1v1h-1zM890 90h1v1h-1zM894 90h1v1h-1zM898 90h1v1h-1zM902 90h1v1h-1zM906 90h1v1h-1zM910 90h1v1h-1zM914 90h1v1h-1zM918 90h1v1h-1zM922 90h1v1h-1zM926 90h1v1h-1zM930 90h1v1h-1zM934 90h1v1h-1zM938 90h1v1h-1zM942 90h1v1h-1zM946 90h1v1h-1zM950 90h1v1h-1zM954 90h1v1h-1zM958 90h1v1h-1zM962 90h1v1h-1zM966 90h1v1h-1zM970 90h1v1h-1zM974 90h1v1h-1zM978 90h1v1h-1zM982 90h1v1h-1zM986 90h1v1h-1zM990 90h1v1h-1zM994 90h1v1h-1zM998 90h1v1h-1zM1002 90h1v1h-1zM1006 90h1v1h-1zM1010 90h1v1h-1zM1014 90h1v1h-1zM1018 90h1v1h-1zM1022 90h1v1h-1zM1026 90h1v1h-1zM1030 90h1v1h-1zM1034 90h1v1h-1zM1038 90h1v1h-1zM1042 90h1v1h-1zM1046 90h1v1h-1zM1050 90h1v1h-1zM1054 90h1v1h-1zM1058 90h1v1h-1zM1062 90h1v1h-1zM1066 90h1v1h-1zM1070 90h1v1h-1zM1074 90h1v1h-1zM1078 90h1v1h-1zM1082 90h1v1h-1zM1086 90h1v1h-1zM1090 90h1v1h-1zM1094 90h1v1h-1zM1098 90h1v1h-1zM1102 90h1v1h-1zM1106 90h1v1h-1zM1110 90h1v1h-1zM1114 90h1v1h-1zM1118 90h1v1h-1zM1122 90h1v1h-1zM1126 90h1v1h-1zM1130 90h1v1h-1zM1134 90h1v1h-1zM1138 90h1v1h-1zM1142 90h1v1h-1zM1146 90h1v1h-1zM1150 90h1v1h-1zM1154 90h1v1h-1zM1158 90h1v1h-1zM1162 90h1v1h-1zM1166 90h1v1h-1zM1170 90h1v1h-1zM1174 90h1v1h-1zM1178 90h1v1h-1zM1182 90h1v1h-1zM1186 90h1v1h-1zM1190 90h1v1h-1zM1194 90h1v1h-1zM1198 90h1v1h-1zM1202 90h1v1h-1zM1206 90h1v1h-1zM1210 90h1v1h-1zM1214 90h1v1h-1zM1218 90h1v1h-1zM1222 90h1v1h-1zM1226 90h1v1h-1zM1230 90h1v1h-1zM1234 90h1v1h-1zM1238 90h1v1h-1zM1242 90h1v1h-1zM1246 90h1v1h-1zM1250 90h1v1h-1zM1254 90h1v1h-1zM1258 90h1v1h-1zM1262 90h1v1h-1zM1266 90h1v1h-1zM1270 90h1v1h-1zM1274 90h1v1h-1zM1278 90h1v1h-1zM1282 90h1v1h-1zM248 92h1v1h-1zM252 92h1v1h-1zM256 92h1v1h-1zM260 92h1v1h-1zM264 92h1v1h-1zM268 92h1v1h-1zM272 92h1v1h-1zM276 92h1v1h-1zM280 92h1v1h-1zM284 92h1v1h-1zM288 92h1v1h-1zM292 92h1v1h-1zM296 92h1v1h-1zM300 92h1v1h-1zM304 92h1v1h-1zM308 92h1v1h-1zM312 92h1v1h-1zM316 92h1v1h-1zM320 92h1v1h-1zM324 92h1v1h-1zM328 92h1v1h-1zM332 92h1v1h-1zM336 92h1v1h-1zM340 92h1v1h-1zM344 92h1v1h-1zM348 92h1v1h-1zM352 92h1v1h-1zM356 92h1v1h-1zM360 92h1v1h-1zM364 92h1v1h-1zM368 92h1v1h-1zM372 92h1v1h-1zM376 92h1v1h-1zM380 92h1v1h-1zM384 92h1v1h-1zM388 92h1v1h-1zM392 92h1v1h-1zM396 92h1v1h-1zM400 92h1v1h-1zM404 92h1v1h-1zM408 92h1v1h-1zM412 92h1v1h-1zM416 92h1v1h-1zM420 92h1v1h-1zM424 92h1v1h-1zM428 92h1v1h-1zM432 92h1v1h-1zM436 92h1v1h-1zM440 92h1v1h-1zM444 92h1v1h-1zM448 92h1v1h-1zM452 92h1v1h-1zM456 92h1v1h-1zM460 92h1v1h-1zM464 92h1v1h-1zM468 92h1v1h-1zM472 92h1v1h-1zM476 92h1v1h-1zM480 92h1v1h-1zM484 92h1v1h-1zM488 92h1v1h-1zM492 92h1v1h-1zM496 92h1v1h-1zM500 92h1v1h-1zM504 92h1v1h-1zM508 92h1v1h-1zM512 92h1v1h-1zM516 92h1v1h-1zM520 92h1v1h-1zM524 92h1v1h-1zM528 92h1v1h-1zM532 92h1v1h-1zM536 92h1v1h-1zM540 92h1v1h-1zM544 92h1v1h-1zM548 92h1v1h-1zM552 92h1v1h-1zM556 92h1v1h-1zM560 92h1v1h-1zM564 92h1v1h-1zM568 92h1v1h-1zM572 92h1v1h-1zM576 92h1v1h-1zM580 92h1v1h-1zM584 92h1v1h-1zM588 92h1v1h-1zM592 92h1v1h-1zM596 92h1v1h-1zM600 92h1v1h-1zM604 92h1v1h-1zM608 92h1v1h-1zM612 92h1v1h-1zM616 92h1v1h-1zM620 92h1v1h-1zM624 92h1v1h-1zM628 92h1v1h-1zM632 92h1v1h-1zM636 92h1v1h-1zM640 92h1v1h-1zM644 92h1v1h-1zM648 92h1v1h-1zM652 92h1v1h-1zM656 92h1v1h-1zM660 92h1v1h-1zM664 92h1v1h-1zM668 92h1v1h-1zM672 92h1v1h-1zM676 92h1v1h-1zM680 92h1v1h-1zM684 92h1v1h-1zM688 92h1v1h-1zM692 92h1v1h-1zM696 92h1v1h-1zM700 92h1v1h-1zM704 92h1v1h-1zM708 92h1v1h-1zM712 92h1v1h-1zM716 92h1v1h-1zM720 92h1v1h-1zM724 92h1v1h-1zM728 92h1v1h-1zM732 92h1v1h-1zM736 92h1v1h-1zM740 92h1v1h-1zM744 92h1v1h-1zM748 92h1v1h-1zM752 92h1v1h-1zM756 92h1v1h-1zM760 92h1v1h-1zM764 92h1v1h-1zM768 92h1v1h-1zM772 92h1v1h-1zM776 92h1v1h-1zM780 92h1v1h-1zM784 92h1v1h-1zM788 92h1v1h-1zM792 92h1v1h-1zM796 92h1v1h-1zM800 92h1v1h-1zM804 92h1v1h-1zM808 92h1v1h-1zM812 92h1v1h-1zM816 92h1v1h-1zM820 92h1v1h-1zM824 92h1v1h-1zM828 92h1v1h-1zM832 92h1v1h-1zM836 92h1v1h-1zM840 92h1v1h-1zM844 92h1v1h-1zM848 92h1v1h-1zM852 92h1v1h-1zM856 92h1v1h-1zM860 92h1v1h-1zM864 92h1v1h-1zM868 92h1v1h-1zM872 92h1v1h-1zM876 92h1v1h-1zM880 92h1v1h-1zM884 92h1v1h-1zM888 92h1v1h-1zM892 92h1v1h-1zM896 92h1v1h-1zM900 92h1v1h-1zM904 92h1v1h-1zM908 92h1v1h-1zM912 92h1v1h-1zM916 92h1v1h-1zM920 92h1v1h-1zM924 92h1v1h-1zM928 92h1v1h-1zM932 92h1v1h-1zM936 92h1v1h-1zM940 92h1v1h-1zM944 92h1v1h-1zM948 92h1v1h-1zM952 92h1v1h-1zM956 92h1v1h-1zM960 92h1v1h-1zM964 92h1v1h-1zM968 92h1v1h-1zM972 92h1v1h-1zM976 92h1v1h-1zM980 92h1v1h-1zM984 92h1v1h-1zM988 92h1v1h-1zM992 92h1v1h-1zM996 92h1v1h-1zM1000 92h1v1h-1zM1004 92h1v1h-1zM1008 92h1v1h-1zM1012 92h1v1h-1zM1016 92h1v1h-1zM1020 92h1v1h-1zM1024 92h1v1h-1zM1028 92h1v1h-1zM1032 92h1v1h-1zM1036 92h1v1h-1zM1040 92h1v1h-1zM1044 92h1v1h-1zM1048 92h1v1h-1zM1052 92h1v1h-1zM1056 92h1v1h-1zM1060 92h1v1h-1zM1064 92h1v1h-1zM1068 92h1v1h-1zM1072 92h1v1h-1zM1076 92h1v1h-1zM1080 92h1v1h-1zM1084 92h1v1h-1zM1088 92h1v1h-1zM1092 92h1v1h-1zM1096 92h1v1h-1zM1100 92h1v1h-1zM1104 92h1v1h-1zM1108 92h1v1h-1zM1112 92h1v1h-1zM1116 92h1v1h-1zM1120 92h1v1h-1zM1124 92h1v1h-1zM1128 92h1v1h-1zM1132 92h1v1h-1zM1136 92h1v1h-1zM1140 92h1v1h-1zM1144 92h1v1h-1zM1148 92h1v1h-1zM1152 92h1v1h-1zM1156 92h1v1h-1zM1160 92h1v1h-1zM1164 92h1v1h-1zM1168 92h1v1h-1zM1172 92h1v1h-1zM1176 92h1v1h-1zM1180 92h1v1h-1zM1184 92h1v1h-1zM1188 92h1v1h-1zM1192 92h1v1h-1zM1196 92h1v1h-1zM1200 92h1v1h-1zM1204 92h1v1h-1zM1208 92h1v1h-1zM1212 92h1v1h-1zM1216 92h1v1h-1zM1220 92h1v1h-1zM1224 92h1v1h-1zM1228 92h1v1h-1zM1232 92h1v1h-1zM1236 92h1v1h-1zM1240 92h1v1h-1zM1244 92h1v1h-1zM1248 92h1v1h-1zM1252 92h1v1h-1zM1256 92h1v1h-1zM1260 92h1v1h-1zM1264 92h1v1h-1zM1268 92h1v1h-1zM1272 92h1v1h-1zM1276 92h1v1h-1zM1280 92h1v1h-1zM1284 92h1v1h-1zM250 94h1v1h-1zM254 94h1v1h-1zM258 94h1v1h-1zM262 94h1v1h-1zM266 94h1v1h-1zM270 94h1v1h-1zM274 94h1v1h-1zM278 94h1v1h-1zM282 94h1v1h-1zM286 94h1v1h-1zM290 94h1v1h-1zM294 94h1v1h-1zM298 94h1v1h-1zM302 94h1v1h-1zM306 94h1v1h-1zM310 94h1v1h-1zM314 94h1v1h-1zM318 94h1v1h-1zM322 94h1v1h-1zM326 94h1v1h-1zM330 94h1v1h-1zM334 94h1v1h-1zM338 94h1v1h-1zM342 94h1v1h-1zM346 94h1v1h-1zM350 94h1v1h-1zM354 94h1v1h-1zM358 94h1v1h-1zM362 94h1v1h-1zM366 94h1v1h-1zM370 94h1v1h-1zM374 94h1v1h-1zM378 94h1v1h-1zM382 94h1v1h-1zM386 94h1v1h-1zM390 94h1v1h-1zM394 94h1v1h-1zM398 94h1v1h-1zM402 94h1v1h-1zM406 94h1v1h-1zM410 94h1v1h-1zM414 94h1v1h-1zM418 94h1v1h-1zM422 94h1v1h-1zM426 94h1v1h-1zM430 94h1v1h-1zM434 94h1v1h-1zM438 94h1v1h-1zM442 94h1v1h-1zM446 94h1v1h-1zM450 94h1v1h-1zM454 94h1v1h-1zM458 94h1v1h-1zM462 94h1v1h-1zM466 94h1v1h-1zM470 94h1v1h-1zM474 94h1v1h-1zM478 94h1v1h-1zM482 94h1v1h-1zM486 94h1v1h-1zM490 94h1v1h-1zM494 94h1v1h-1zM498 94h1v1h-1zM502 94h1v1h-1zM506 94h1v1h-1zM510 94h1v1h-1zM514 94h1v1h-1zM518 94h1v1h-1zM522 94h1v1h-1zM526 94h1v1h-1zM530 94h1v1h-1zM534 94h1v1h-1zM538 94h1v1h-1zM542 94h1v1h-1zM546 94h1v1h-1zM550 94h1v1h-1zM554 94h1v1h-1zM558 94h1v1h-1zM562 94h1v1h-1zM566 94h1v1h-1zM570 94h1v1h-1zM574 94h1v1h-1zM578 94h1v1h-1zM582 94h1v1h-1zM586 94h1v1h-1zM590 94h1v1h-1zM594 94h1v1h-1zM598 94h1v1h-1zM602 94h1v1h-1zM606 94h1v1h-1zM610 94h1v1h-1zM614 94h1v1h-1zM618 94h1v1h-1zM622 94h1v1h-1zM626 94h1v1h-1zM630 94h1v1h-1zM634 94h1v1h-1zM638 94h1v1h-1zM642 94h1v1h-1zM646 94h1v1h-1zM650 94h1v1h-1zM654 94h1v1h-1zM658 94h1v1h-1zM662 94h1v1h-1zM666 94h1v1h-1zM670 94h1v1h-1zM674 94h1v1h-1zM678 94h1v1h-1zM682 94h1v1h-1zM686 94h1v1h-1zM690 94h1v1h-1zM694 94h1v1h-1zM698 94h1v1h-1zM702 94h1v1h-1zM706 94h1v1h-1zM710 94h1v1h-1zM714 94h1v1h-1zM718 94h1v1h-1zM722 94h1v1h-1zM726 94h1v1h-1zM730 94h1v1h-1zM734 94h1v1h-1zM738 94h1v1h-1zM742 94h1v1h-1zM746 94h1v1h-1zM750 94h1v1h-1zM754 94h1v1h-1zM758 94h1v1h-1zM762 94h1v1h-1zM766 94h1v1h-1zM770 94h1v1h-1zM774 94h1v1h-1zM778 94h1v1h-1zM782 94h1v1h-1zM786 94h1v1h-1zM790 94h1v1h-1zM794 94h1v1h-1zM798 94h1v1h-1zM802 94h1v1h-1zM806 94h1v1h-1zM810 94h1v1h-1zM814 94h1v1h-1zM818 94h1v1h-1zM822 94h1v1h-1zM826 94h1v1h-1zM830 94h1v1h-1zM834 94h1v1h-1zM838 94h1v1h-1zM842 94h1v1h-1zM846 94h1v1h-1zM850 94h1v1h-1zM854 94h1v1h-1zM858 94h1v1h-1zM862 94h1v1h-1zM866 94h1v1h-1zM870 94h1v1h-1zM874 94h1v1h-1zM878 94h1v1h-1zM882 94h1v1h-1zM886 94h1v1h-1zM890 94h1v1h-1zM894 94h1v1h-1zM898 94h1v1h-1zM902 94h1v1h-1zM906 94h1v1h-1zM910 94h1v1h-1zM914 94h1v1h-1zM918 94h1v1h-1zM922 94h1v1h-1zM926 94h1v1h-1zM930 94h1v1h-1zM934 94h1v1h-1zM938 94h1v1h-1zM942 94h1v1h-1zM946 94h1v1h-1zM950 94h1v1h-1zM954 94h1v1h-1zM958 94h1v1h-1zM962 94h1v1h-1zM966 94h1v1h-1zM970 94h1v1h-1zM974 94h1v1h-1zM978 94h1v1h-1zM982 94h1v1h-1zM986 94h1v1h-1zM990 94h1v1h-1zM994 94h1v1h-1zM998 94h1v1h-1zM1002 94h1v1h-1zM1006 94h1v1h-1zM1010 94h1v1h-1zM1014 94h1v1h-1zM1018 94h1v1h-1zM1022 94h1v1h-1zM1026 94h1v1h-1zM1030 94h1v1h-1zM1034 94h1v1h-1zM1038 94h1v1h-1zM1042 94h1v1h-1zM1046 94h1v1h-1zM1050 94h1v1h-1zM1054 94h1v1h-1zM1058 94h1v1h-1zM1062 94h1v1h-1zM1066 94h1v1h-1zM1070 94h1v1h-1zM1074 94h1v1h-1zM1078 94h1v1h-1zM1082 94h1v1h-1zM1086 94h1v1h-1zM1090 94h1v1h-1zM1094 94h1v1h-1zM1098 94h1v1h-1zM1102 94h1v1h-1zM1106 94h1v1h-1zM1110 94h1v1h-1zM1114 94h1v1h-1zM1118 94h1v1h-1zM1122 94h1v1h-1zM1126 94h1v1h-1zM1130 94h1v1h-1zM1134 94h1v1h-1zM1138 94h1v1h-1zM1142 94h1v1h-1zM1146 94h1v1h-1zM1150 94h1v1h-1zM1154 94h1v1h-1zM1158 94h1v1h-1zM1162 94h1v1h-1zM1166 94h1v1h-1zM1170 94h1v1h-1zM1174 94h1v1h-1zM1178 94h1v1h-1zM1182 94h1v1h-1zM1186 94h1v1h-1zM1190 94h1v1h-1zM1194 94h1v1h-1zM1198 94h1v1h-1zM1202 94h1v1h-1zM1206 94h1v1h-1zM1210 94h1v1h-1zM1214 94h1v1h-1zM1218 94h1v1h-1zM1222 94h1v1h-1zM1226 94h1v1h-1zM1230 94h1v1h-1zM1234 94h1v1h-1zM1238 94h1v1h-1zM1242 94h1v1h-1zM1246 94h1v1h-1zM1250 94h1v1h-1zM1254 94h1v1h-1zM1258 94h1v1h-1zM1262 94h1v1h-1zM1266 94h1v1h-1zM1270 94h1v1h-1zM1274 94h1v1h-1zM1278 94h1v1h-1zM1282 94h1v1h-1z" fill="#5b80c8"/></svg><svg class="a" style="left:1286px;top:74px" width="70" height="25" viewBox="0 0 70 25" shape-rendering="crispEdges">
<rect x="6" y="11" width="7" height="7" fill="#fff"/>
<path d="M6 11h7v7h-7z" fill="none"/>
<rect x="6" y="11" width="7" height="1" fill="#333"/><rect x="6" y="11" width="1" height="7" fill="#333"/>
<rect x="6" y="17" width="7" height="1" fill="#6a8ac5"/><rect x="12" y="11" width="1" height="7" fill="#6a8ac5"/>
<rect x="7" y="12" width="5" height="1" fill="#6a8ac5"/><rect x="7" y="12" width="1" height="5" fill="#6a8ac5"/>
<rect x="7" y="16" width="5" height="1" fill="#333"/><rect x="11" y="12" width="1" height="5" fill="#333"/>
<rect x="25" y="9" width="10" height="10" fill="#fff"/>
<rect x="25" y="9" width="10" height="1" fill="#333"/><rect x="25" y="9" width="1" height="10" fill="#333"/>
<rect x="25" y="18" width="10" height="1" fill="#6a8ac5"/><rect x="34" y="9" width="1" height="10" fill="#6a8ac5"/>
<rect x="26" y="10" width="8" height="1" fill="#6a8ac5"/><rect x="26" y="10" width="1" height="8" fill="#6a8ac5"/>
<rect x="26" y="17" width="8" height="1" fill="#333"/><rect x="33" y="10" width="1" height="8" fill="#333"/>
<rect x="50" y="5" width="14" height="14" fill="#fff"/>
<rect x="50" y="5" width="14" height="1" fill="#333"/><rect x="50" y="5" width="1" height="14" fill="#333"/>
<rect x="50" y="18" width="14" height="1" fill="#6a8ac5"/><rect x="63" y="5" width="1" height="14" fill="#6a8ac5"/>
<rect x="51" y="6" width="12" height="1" fill="#6a8ac5"/><rect x="51" y="6" width="1" height="12" fill="#6a8ac5"/>
<rect x="51" y="17" width="12" height="1" fill="#333"/><rect x="62" y="6" width="1" height="12" fill="#333"/>
</svg><svg class="a" style="left:1286px;top:74px" width="70" height="25" viewBox="0 0 70 25">
<path d="M19 4.5 L14.5 9 M14.5 6 V9 H17.5" stroke="#000" stroke-width="1.05" fill="none"/>
<path d="M28 16 L34 10 M34 10 L38 6 M35 5.5 H38.5 V9" stroke="#000" stroke-width="1.05" fill="none"/>
<path d="M53.5 8.5 L60.5 15.5 M60.5 8.5 L53.5 15.5" stroke="#000" stroke-width="1.05" fill="none"/>
</svg><div class="a" style="left:6px;top:98px;width:1349px;height:1px;background:#6a8ac5"></div><div class="a" style="left:5px;top:99px;width:1350px;height:621px;background:#eeeeee"></div><div class="a" style="left:5px;top:99px;width:1350px;height:1px;background:#fafafa"></div><div class="a" style="left:5px;top:720px;width:1350px;height:2px;background:#f4f4f4"></div><div class="a" style="left:12px;top:726px;width:1340px;height:1px;background:#333"></div><div class="a" style="left:14px;top:104px;width:119px;height:17px;background:#00b000;border:1px solid #7a7a7a"></div><div class="t b" style="left:14px;top:106.84px;width:119px;text-align:center;font-size:12px;color:#fff;letter-spacing:-0.12px">Em atendimento</div><div class="a" style="left:136px;top:104px;width:119px;height:17px;background:linear-gradient(#fbfcfe,#dfe8f3 60%,#cdd9e8);border:1px solid #7a7a7a"></div><div class="t b" style="left:136px;top:106.84px;width:119px;text-align:center;font-size:12px;color:#8c8c8c;letter-spacing:-0.12px">Internação</div><div class="a" style="left:257px;top:104px;width:119px;height:17px;background:#b00000;border:none"></div><div class="t b" style="left:257px;top:106.84px;width:119px;text-align:center;font-size:12px;color:#fff;letter-spacing:-0.12px">Intercorrências</div><div class="a" style="left:378px;top:104px;width:120px;height:17px;background:#ffff00;border:none"></div><div class="t b" style="left:378px;top:106.84px;width:120px;text-align:center;font-size:12px;color:#ff0000;letter-spacing:-0.12px">Ocorrências</div><div class="a" style="left:499px;top:104px;width:92px;height:17px;background:#0000ff;border:none"></div><div class="t b" style="left:499px;top:106.84px;width:92px;text-align:center;font-size:12px;color:#fff;letter-spacing:-0.12px">Pl. Terapêutico</div><div class="a" style="left:593px;top:104px;width:92px;height:17px;background:#0000ff;border:none"></div><div class="t b" style="left:593px;top:106.84px;width:92px;text-align:center;font-size:12px;color:#fff;letter-spacing:-0.12px">Contato</div><div class="a" style="left:687px;top:104px;width:92px;height:17px;background:#0000ff;border:none"></div><div class="t b" style="left:687px;top:106.84px;width:92px;text-align:center;font-size:12px;color:#fff;letter-spacing:-0.12px">Cobertura</div><div class="a" style="left:7px;top:126px;width:1347px;height:64px;border:1px solid #8a8a8a;border-right-color:#d0d0d0;border-bottom-color:#d0d0d0;background:#fff"></div><div class="a" style="left:8px;top:127px;width:1345px;height:62px;border:1px solid #a0a0a0;background:#e8e8e8"></div><div class="a" style="left:9px;top:128px;width:1326px;height:15px;background:#99ccff"></div><div class="a" style="left:9px;top:143px;width:1326px;height:15px;background:#e6e6e6"></div><div class="a" style="left:9px;top:158px;width:1326px;height:15px;background:#99ccff"></div><div class="a" style="left:9px;top:173px;width:1326px;height:15px;background:#e6e6e6"></div><div class="t b" style="left:10px;top:129.84px;font-size:12px;color:#000080;letter-spacing:-0.12px">N° Internação: <span style="color:#000">898</span></div><div class="t b" style="left:354px;top:129.84px;font-size:12px;color:#000080;letter-spacing:-0.12px">Paciente: <span style="color:#000">Cecilio Almeida de Lima</span></div><div class="t b" style="left:950px;top:129.84px;font-size:12px;color:#000080;letter-spacing:-0.12px">Idade: <span style="color:#000">2a 6m</span></div><div class="t b" style="left:1163px;top:129.84px;font-size:12px;color:#000080;letter-spacing:-0.12px">Sexo: <span style="color:#000">Masculino</span></div><div class="t b" style="left:10px;top:144.84px;font-size:12px;color:#000080;letter-spacing:-0.12px">Motivo Atend.: <span style="color:#000">paciente paciente. paciente</span></div><div class="t b" style="left:804px;top:144.84px;font-size:12px;color:#000080;letter-spacing:-0.12px">Início Atend: <span style="color:#000">03/06/2005</span></div><div class="t b" style="left:1069px;top:144.84px;font-size:12px;color:#000080;letter-spacing:-0.12px">Reg. Alta: <span style="color:#000"></span></div><div class="t b" style="left:10px;top:159.84px;font-size:12px;color:#000080;letter-spacing:-0.12px">Contrato: <span style="color:#000">Amil_Contrato</span></div><div class="t b" style="left:434px;top:159.84px;font-size:12px;color:#000080;letter-spacing:-0.12px">Grau de dependência: <span style="color:#000">Independente</span></div><div class="t b" style="left:831px;top:159.84px;font-size:12px;color:#000080;letter-spacing:-0.12px">Zon.: <span style="color:#000">Zona Central Rosa</span></div><div class="t b" style="left:1096px;top:159.84px;font-size:12px;color:#000080;letter-spacing:-0.12px">N° Prontuário: <span style="color:#000">501</span></div><div class="t b" style="left:10px;top:174.84px;font-size:12px;color:#000080;letter-spacing:-0.12px">Tipo de Serviço: <span style="color:#000">Home Care</span></div><div class="t b" style="left:514px;top:174.84px;font-size:12px;color:#000080;letter-spacing:-0.12px">Grupo Dispensação: <span style="color:#000">mensal</span></div><div class="t b" style="left:990px;top:174.84px;font-size:12px;color:#000080;letter-spacing:-0.12px">Roteiro entrega: <span style="color:#000">Rota Litoral Santos</span></div><div class="a" style="left:1336px;top:127px;width:16px;height:62px;background:#eeeeee;border-left:1px solid #c8c8c8"></div><div class="a" style="left:1337px;top:127px;width:15px;height:16px;background:#eeeeee;border:1px solid #b8b8b8;box-shadow:inset 1px 1px 0 #fff"></div><svg class="a" style="left:0;top:0;overflow:visible" width="1" height="1"><polygon points="1340.5,137.0 1348.5,137.0 1344.5,133.0" fill="#333"/></svg><div class="a" style="left:1337px;top:143px;width:15px;height:30px;background:linear-gradient(90deg,#dde8f5,#f8fbff 40%,#c9daee);border:1px solid #7f9dc8;border-radius:1px"></div><svg class="a" style="left:1340px;top:153px" width="10" height="8" shape-rendering="crispEdges"><path d="M0 1h9M0 3h9M0 5h9" stroke="#7a96c0"/></svg><div class="a" style="left:1337px;top:172px;width:15px;height:16px;background:#eeeeee;border:1px solid #b8b8b8;box-shadow:inset 1px 1px 0 #fff"></div><svg class="a" style="left:0;top:0;overflow:visible" width="1" height="1"><polygon points="1340.5,178.0 1348.5,178.0 1344.5,182.0" fill="#333"/></svg><div class="a" style="left:6px;top:193px;width:124px;height:24px;background:#fff;border:1px solid #8094aa;border-right-color:#e0e0e0;border-bottom-color:#e0e0e0;box-shadow:inset 1px 1px 0 #a8b4c4"></div><div class="a" style="left:6px;top:192px;width:150px;height:1px;background:#7d8d9d"></div><div class="a" style="left:130px;top:193px;width:25px;height:24px;background:linear-gradient(#f4f8fc,#d2e2f2);border-top:2px solid #fff;border-left:3px solid #fff;border-right:2px solid #5a5a5a;border-bottom:2px solid #5a5a5a"></div><div class="a" style="left:131px;top:217px;width:24px;height:1px;background:#7d8d9d"></div><svg class="a" style="left:133px;top:195px" width="20" height="20" viewBox="0 0 20 20">
<path d="M11 10.5 L16 15.5" stroke="#555" stroke-width="2.6" stroke-linecap="round"/>
<circle cx="8" cy="7.5" r="4.6" fill="#80ccff" stroke="#c8c8c8" stroke-width="1.2"/>
<circle cx="8" cy="6.5" r="2.2" fill="#c8ecff" opacity="0.7"/>
</svg><div class="a" style="left:7px;top:218px;width:147px;height:79px;background:#fff;border:1px solid #c8c8c8;border-top-color:#8a9aaa;border-bottom:1px solid #7f8fa0"></div><svg class="a" style="left:0;top:0" width="160" height="300">
<defs><radialGradient id="gg" cx="0.35" cy="0.35" r="0.7"><stop offset="0" stop-color="#9f9"/><stop offset="0.5" stop-color="#1a1"/><stop offset="1" stop-color="#050"/></radialGradient>
<radialGradient id="bg" cx="0.35" cy="0.35" r="0.7"><stop offset="0" stop-color="#bdf"/><stop offset="0.5" stop-color="#24c"/><stop offset="1" stop-color="#013"/></radialGradient></defs>
<circle cx="13" cy="226" r="5.2" fill="url(#gg)"/>
<path d="M15.5 234 V271.5 M15.5 241.5 H25 M15.5 256.5 H25 M15.5 271.5 H25" stroke="#a8bcd4" fill="none"/>
<circle cx="33" cy="241" r="5.2" fill="url(#bg)"/>
<circle cx="33" cy="256" r="5.2" fill="url(#bg)"/>
<circle cx="33" cy="271" r="5.2" fill="url(#bg)"/>
</svg><div class="t b" style="left:22px;top:221.69px;font-size:11px;color:#333;letter-spacing:0px">Cecilio A d L[2113]</div><div class="t b" style="left:42px;top:236.69px;font-size:11px;color:#333;letter-spacing:0px">08/04/2005 [516]</div><div class="t b" style="left:42px;top:251.69px;font-size:11px;color:#333;letter-spacing:0px">18/05/2005 [786]</div><div class="a" style="left:41px;top:264px;width:87px;height:15px;background:#b8cfe5"></div><div class="t b" style="left:42px;top:266.69px;font-size:11px;color:#333;letter-spacing:0px">03/06/2005 [898]</div><div class="a" style="left:6px;top:298px;width:149px;height:10px;background:#eeeeee;border-top:1px solid #fff;border-bottom:1px solid #6a7a8a"></div><svg class="a" style="left:0;top:0" width="160" height="310" shape-rendering="crispEdges"><path d="M11 303h1v1h-1zM15 303h1v1h-1zM19 303h1v1h-1zM23 303h1v1h-1zM27 303h1v1h-1zM31 303h1v1h-1zM35 303h1v1h-1zM39 303h1v1h-1zM43 303h1v1h-1zM47 303h1v1h-1zM51 303h1v1h-1zM55 303h1v1h-1zM59 303h1v1h-1zM63 303h1v1h-1zM67 303h1v1h-1zM71 303h1v1h-1zM75 303h1v1h-1zM79 303h1v1h-1zM83 303h1v1h-1zM87 303h1v1h-1zM91 303h1v1h-1zM95 303h1v1h-1zM99 303h1v1h-1zM103 303h1v1h-1zM107 303h1v1h-1zM111 303h1v1h-1zM115 303h1v1h-1zM119 303h1v1h-1zM123 303h1v1h-1zM127 303h1v1h-1zM131 303h1v1h-1zM135 303h1v1h-1zM139 303h1v1h-1zM143 303h1v1h-1zM147 303h1v1h-1zM151 303h1v1h-1z" fill="#98a0a8"/></svg><div class="a" style="left:7px;top:307px;width:147px;height:414px;background:#fff;border-left:1px solid #7f8fa0"></div><div class="a" style="left:7px;top:307px;width:147px;height:1px;background:#6a7a8a"></div><div class="a" style="left:8px;top:428px;width:129px;height:17px;background:#b8cfe5"></div><div class="a" style="left:8px;top:308px;width:129px;height:396px;overflow:hidden"><div class="t b" style="left:1px;top:4.69px;font-size:11px;color:#333;letter-spacing:0.2px">Cadastro</div><div class="t b" style="left:1px;top:21.69px;font-size:11px;color:#333;letter-spacing:0.2px">Avaliação</div><div class="t b" style="left:1px;top:38.69px;font-size:11px;color:#333;letter-spacing:0.2px">Orçamento</div><div class="t b" style="left:1px;top:55.69px;font-size:11px;color:#333;letter-spacing:0.2px">Visualizar Orçamento</div><div class="t b" style="left:1px;top:72.69px;font-size:11px;color:#333;letter-spacing:0.2px">Plano Terapêutico</div><div class="t b" style="left:1px;top:89.69px;font-size:11px;color:#333;letter-spacing:0.2px">Analise Financeira</div><div class="t b" style="left:1px;top:106.69px;font-size:11px;color:#333;letter-spacing:0.2px">Programar Visitas</div><div class="t b" style="left:1px;top:123.69px;font-size:11px;color:#333;letter-spacing:0.2px">Equipe</div><div class="t b" style="left:1px;top:140.69px;font-size:11px;color:#333;letter-spacing:0.2px">Equipamentos</div><div class="t b" style="left:1px;top:157.69px;font-size:11px;color:#333;letter-spacing:0.2px">Gases Medicinais</div><div class="t b" style="left:1px;top:174.69px;font-size:11px;color:#333;letter-spacing:0.2px">Gases Medic. Hosp.</div><div class="t b" style="left:1px;top:191.69px;font-size:11px;color:#333;letter-spacing:0.2px">Unid. Atend. Móvel</div><div class="t b" style="left:1px;top:208.69px;font-size:11px;color:#333;letter-spacing:0.2px">Prescrições</div><div class="t b" style="left:1px;top:225.69px;font-size:11px;color:#333;letter-spacing:0.2px">Evolução Clínica</div><div class="t b" style="left:1px;top:242.69px;font-size:11px;color:#333;letter-spacing:0.2px">Exames</div><div class="t b" style="left:1px;top:259.69px;font-size:11px;color:#333;letter-spacing:0.2px">Ocorrências</div><div class="t b" style="left:1px;top:276.69px;font-size:11px;color:#333;letter-spacing:0.2px">Intercorrências</div><div class="t b" style="left:1px;top:293.69px;font-size:11px;color:#333;letter-spacing:0.2px">Proced. Especiais</div><div class="t b" style="left:1px;top:310.69px;font-size:11px;color:#333;letter-spacing:0.2px">Proced. Espec. Amb.</div><div class="t b" style="left:1px;top:327.69px;font-size:11px;color:#333;letter-spacing:0.2px">Relatório Multidisciplinar</div><div class="t b" style="left:1px;top:344.69px;font-size:11px;color:#333;letter-spacing:0.2px">Registrar Alta</div><div class="t b" style="left:1px;top:361.69px;font-size:11px;color:#333;letter-spacing:0.2px">Impressos</div><div class="t b" style="left:1px;top:378.69px;font-size:11px;color:#333;letter-spacing:0.2px">Instr. Implantação</div></div><div class="a" style="left:137px;top:308px;width:16px;height:396px;background:#eeeeee;border-left:1px solid #6f7f90;border-right:1px solid #6f7f90"></div><div class="a" style="left:138px;top:308px;width:15px;height:16px;background:#eeeeee;border:1px solid #b8b8b8;box-shadow:inset 1px 1px 0 #fff"></div><svg class="a" style="left:0;top:0;overflow:visible" width="1" height="1"><polygon points="141.5,318.0 149.5,318.0 145.5,314.0" fill="#333"/></svg><div class="a" style="left:137px;top:324px;width:16px;height:229px;background:linear-gradient(90deg,#dce7f4,#f7faff 40%,#c8d9ee);border:1px solid #6a8ac5;border-right-color:#6f7f90"></div><div class="a" style="left:153px;top:308px;width:3px;height:413px;background:#fff"></div><svg class="a" style="left:141px;top:435px" width="10" height="8" shape-rendering="crispEdges"><path d="M0 1h9M0 3h9M0 5h9" stroke="#7a96c0"/></svg><div class="a" style="left:138px;top:688px;width:15px;height:16px;background:#eeeeee;border:1px solid #b8b8b8;box-shadow:inset 1px 1px 0 #fff"></div><svg class="a" style="left:0;top:0;overflow:visible" width="1" height="1"><polygon points="141.5,694.0 149.5,694.0 145.5,698.0" fill="#333"/></svg><div class="a" style="left:8px;top:704px;width:145px;height:16px;background:#eeeeee"></div><div class="a" style="left:8px;top:704px;width:15px;height:16px;background:#eeeeee;border:1px solid #b8b8b8;box-shadow:inset 1px 1px 0 #fff"></div><svg class="a" style="left:0;top:0;overflow:visible" width="1" height="1"><polygon points="17.5,708.0 17.5,716.0 13.5,712.0" fill="#333"/></svg><div class="a" style="left:23px;top:704px;width:88px;height:16px;background:linear-gradient(#f8fbff,#dce7f4 50%,#c8d9ee);border:1px solid #7f9dc8"></div><svg class="a" style="left:64px;top:708px" width="8" height="10" shape-rendering="crispEdges"><path d="M1 0v9M3 0v9M5 0v9" stroke="#7a96c0"/></svg><div class="a" style="left:121px;top:704px;width:16px;height:16px;background:#eeeeee;border:1px solid #b8b8b8;box-shadow:inset 1px 1px 0 #fff"></div><svg class="a" style="left:0;top:0;overflow:visible" width="1" height="1"><polygon points="127.0,708.0 127.0,716.0 131.0,712.0" fill="#333"/></svg><div class="a" style="left:137px;top:704px;width:16px;height:16px;background:#eeeeee;border:1px solid #d0d0d0"></div><div class="a" style="left:6px;top:720px;width:149px;height:1px;background:#fff"></div><div class="a" style="left:5px;top:192px;width:2px;height:529px;background:#7d8d9d"></div><div class="a" style="left:155px;top:190px;width:8px;height:531px;background:#eeeeee"></div><svg class="a" style="left:0;top:0" width="170" height="728" shape-rendering="crispEdges"><path d="M159 196h1v1h-1zM161 198h1v1h-1zM159 200h1v1h-1zM161 202h1v1h-1zM159 204h1v1h-1zM161 206h1v1h-1zM159 208h1v1h-1zM161 210h1v1h-1zM159 212h1v1h-1zM161 214h1v1h-1zM159 216h1v1h-1zM161 218h1v1h-1zM159 220h1v1h-1zM161 222h1v1h-1zM159 224h1v1h-1zM161 226h1v1h-1zM159 228h1v1h-1zM161 230h1v1h-1zM159 232h1v1h-1zM161 234h1v1h-1zM159 236h1v1h-1zM161 238h1v1h-1zM159 240h1v1h-1zM161 242h1v1h-1zM159 244h1v1h-1zM161 246h1v1h-1zM159 248h1v1h-1zM161 250h1v1h-1zM159 252h1v1h-1zM161 254h1v1h-1zM159 256h1v1h-1zM161 258h1v1h-1zM159 260h1v1h-1zM161 262h1v1h-1zM159 264h1v1h-1zM161 266h1v1h-1zM159 268h1v1h-1zM161 270h1v1h-1zM159 272h1v1h-1zM161 274h1v1h-1zM159 276h1v1h-1zM161 278h1v1h-1zM159 280h1v1h-1zM161 282h1v1h-1zM159 284h1v1h-1zM161 286h1v1h-1zM159 288h1v1h-1zM161 290h1v1h-1zM159 292h1v1h-1zM161 294h1v1h-1zM159 296h1v1h-1zM161 298h1v1h-1zM159 300h1v1h-1zM161 302h1v1h-1zM159 304h1v1h-1zM161 306h1v1h-1zM159 308h1v1h-1zM161 310h1v1h-1zM159 312h1v1h-1zM161 314h1v1h-1zM159 316h1v1h-1zM161 318h1v1h-1zM159 320h1v1h-1zM161 322h1v1h-1zM159 324h1v1h-1zM161 326h1v1h-1zM159 328h1v1h-1zM161 330h1v1h-1zM159 332h1v1h-1zM161 334h1v1h-1zM159 336h1v1h-1zM161 338h1v1h-1zM159 340h1v1h-1zM161 342h1v1h-1zM159 344h1v1h-1zM161 346h1v1h-1zM159 348h1v1h-1zM161 350h1v1h-1zM159 352h1v1h-1zM161 354h1v1h-1zM159 356h1v1h-1zM161 358h1v1h-1zM159 360h1v1h-1zM161 362h1v1h-1zM159 364h1v1h-1zM161 366h1v1h-1zM159 368h1v1h-1zM161 370h1v1h-1zM159 372h1v1h-1zM161 374h1v1h-1zM159 376h1v1h-1zM161 378h1v1h-1zM159 380h1v1h-1zM161 382h1v1h-1zM159 384h1v1h-1zM161 386h1v1h-1zM159 388h1v1h-1zM161 390h1v1h-1zM159 392h1v1h-1zM161 394h1v1h-1zM159 396h1v1h-1zM161 398h1v1h-1zM159 400h1v1h-1zM161 402h1v1h-1zM159 404h1v1h-1zM161 406h1v1h-1zM159 408h1v1h-1zM161 410h1v1h-1zM159 412h1v1h-1zM161 414h1v1h-1zM159 416h1v1h-1zM161 418h1v1h-1zM159 420h1v1h-1zM161 422h1v1h-1zM159 424h1v1h-1zM161 426h1v1h-1zM159 428h1v1h-1zM161 430h1v1h-1zM159 432h1v1h-1zM161 434h1v1h-1zM159 436h1v1h-1zM161 438h1v1h-1zM159 440h1v1h-1zM161 442h1v1h-1zM159 444h1v1h-1zM161 446h1v1h-1zM159 448h1v1h-1zM161 450h1v1h-1zM159 452h1v1h-1zM161 454h1v1h-1zM159 456h1v1h-1zM161 458h1v1h-1zM159 460h1v1h-1zM161 462h1v1h-1zM159 464h1v1h-1zM161 466h1v1h-1zM159 468h1v1h-1zM161 470h1v1h-1zM159 472h1v1h-1zM161 474h1v1h-1zM159 476h1v1h-1zM161 478h1v1h-1zM159 480h1v1h-1zM161 482h1v1h-1zM159 484h1v1h-1zM161 486h1v1h-1zM159 488h1v1h-1zM161 490h1v1h-1zM159 492h1v1h-1zM161 494h1v1h-1zM159 496h1v1h-1zM161 498h1v1h-1zM159 500h1v1h-1zM161 502h1v1h-1zM159 504h1v1h-1zM161 506h1v1h-1zM159 508h1v1h-1zM161 510h1v1h-1zM159 512h1v1h-1zM161 514h1v1h-1zM159 516h1v1h-1zM161 518h1v1h-1zM159 520h1v1h-1zM161 522h1v1h-1zM159 524h1v1h-1zM161 526h1v1h-1zM159 528h1v1h-1zM161 530h1v1h-1zM159 532h1v1h-1zM161 534h1v1h-1zM159 536h1v1h-1zM161 538h1v1h-1zM159 540h1v1h-1zM161 542h1v1h-1zM159 544h1v1h-1zM161 546h1v1h-1zM159 548h1v1h-1zM161 550h1v1h-1zM159 552h1v1h-1zM161 554h1v1h-1zM159 556h1v1h-1zM161 558h1v1h-1zM159 560h1v1h-1zM161 562h1v1h-1zM159 564h1v1h-1zM161 566h1v1h-1zM159 568h1v1h-1zM161 570h1v1h-1zM159 572h1v1h-1zM161 574h1v1h-1zM159 576h1v1h-1zM161 578h1v1h-1zM159 580h1v1h-1zM161 582h1v1h-1zM159 584h1v1h-1zM161 586h1v1h-1zM159 588h1v1h-1zM161 590h1v1h-1zM159 592h1v1h-1zM161 594h1v1h-1zM159 596h1v1h-1zM161 598h1v1h-1zM159 600h1v1h-1zM161 602h1v1h-1zM159 604h1v1h-1zM161 606h1v1h-1zM159 608h1v1h-1zM161 610h1v1h-1zM159 612h1v1h-1zM161 614h1v1h-1zM159 616h1v1h-1zM161 618h1v1h-1zM159 620h1v1h-1zM161 622h1v1h-1zM159 624h1v1h-1zM161 626h1v1h-1zM159 628h1v1h-1zM161 630h1v1h-1zM159 632h1v1h-1zM161 634h1v1h-1zM159 636h1v1h-1zM161 638h1v1h-1zM159 640h1v1h-1zM161 642h1v1h-1zM159 644h1v1h-1zM161 646h1v1h-1zM159 648h1v1h-1zM161 650h1v1h-1zM159 652h1v1h-1zM161 654h1v1h-1zM159 656h1v1h-1zM161 658h1v1h-1zM159 660h1v1h-1zM161 662h1v1h-1zM159 664h1v1h-1zM161 666h1v1h-1zM159 668h1v1h-1zM161 670h1v1h-1zM159 672h1v1h-1zM161 674h1v1h-1zM159 676h1v1h-1zM161 678h1v1h-1zM159 680h1v1h-1zM161 682h1v1h-1zM159 684h1v1h-1zM161 686h1v1h-1zM159 688h1v1h-1zM161 690h1v1h-1zM159 692h1v1h-1zM161 694h1v1h-1zM159 696h1v1h-1zM161 698h1v1h-1zM159 700h1v1h-1zM161 702h1v1h-1zM159 704h1v1h-1zM161 706h1v1h-1zM159 708h1v1h-1zM161 710h1v1h-1zM159 712h1v1h-1zM161 714h1v1h-1z" fill="#98a0a8"/></svg><div class="a" style="left:164px;top:192px;width:1190px;height:529px;background:#eeeeee;border-left:1px solid #8a9ab0;border-top:1px solid #8a9ab0"></div><div class="a" style="left:165px;top:193px;width:2px;height:527px;background:#dde8f4"></div><svg class="a" style="left:0;top:0" width="1360" height="230" shape-rendering="crispEdges">
<path d="M168.5 216 V202.5 L174.5 196.5 H227.5 V216" fill="#eeeeee" stroke="#7a8a9a"/>
<path d="M423.5 216 V202.5 L429.5 196.5 H514.5 V216" fill="#eeeeee" stroke="#7a8a9a"/>
<path d="M228.5 217 V201.5 L233.5 196.5 H421.5 V217" fill="#c8dcf0" stroke="#6a8ac5"/>
</svg><div class="t b" style="left:178px;top:199.84px;font-size:12px;color:#222;letter-spacing:-0.12px">Equipe</div><div class="t b" style="left:237px;top:199.84px;font-size:12px;color:#222;letter-spacing:-0.12px">Escala Enfermagem Domiciliar</div><div class="t b" style="left:432px;top:199.84px;font-size:12px;color:#222;letter-spacing:-0.12px">Comentários</div><div class="a" style="left:166px;top:215px;width:1187px;height:1px;background:#6a8ac5"></div><div class="a" style="left:166px;top:215px;width:1px;height:506px;background:#6a8ac5"></div><div class="a" style="left:229px;top:215px;width:192px;height:2px;background:#c8dcf0"></div><div class="a" style="left:167px;top:216px;width:1186px;height:3px;background:#c8dcf0"></div><div class="a" style="left:167px;top:216px;width:1186px;height:1px;background:#f4f8fc"></div><div class="a" style="left:167px;top:216px;width:1px;height:504px;background:#c8dcf0"></div><div class="a" style="left:1349px;top:216px;width:4px;height:505px;background:#c8dcf0"></div><div class="a" style="left:167px;top:718px;width:1186px;height:3px;background:#c8dcf0"></div><div class="a" style="left:166px;top:720px;width:1187px;height:1px;background:#8aa0b8"></div><div class="a" style="left:1352px;top:216px;width:1px;height:505px;background:#7a8ca4"></div><div class="a" style="left:1353px;top:192px;width:1px;height:529px;background:#c0cad6"></div><div class="a" style="left:168px;top:219px;width:1181px;height:109px;border:1px solid #a0a0a0;border-right-color:#fff;border-bottom-color:#fff"></div><div class="a" style="left:169px;top:220px;width:1179px;height:107px;border:1px solid #fff;border-right-color:#a0a0a0;border-bottom-color:#a0a0a0"></div><div class="a" style="left:177px;top:230px;width:237px;height:90px;border:1px solid #a0a0a0;border-right-color:#fff;border-bottom-color:#fff"></div><div class="a" style="left:178px;top:231px;width:235px;height:88px;border:1px solid #fff;border-right-color:#a0a0a0;border-bottom-color:#a0a0a0"></div><div class="a" style="left:182px;top:224px;width:63px;height:10px;background:#eeeeee"></div><div class="t b" style="left:184px;top:225.84px;font-size:12px;color:#222;letter-spacing:-0.12px">Instruções</div><div class="a" style="left:181px;top:241px;width:229px;height:75px;background:#fff;border:1px solid #a0a0a0;border-right-color:#c8c8c8;border-bottom-color:#c8c8c8"></div><div class="t" style="left:183px;top:245.84px;font-size:12px;color:#222;letter-spacing:0.16px">Media complexidade, necessita conheci</div><div class="t" style="left:183px;top:261.84px;font-size:12px;color:#222;letter-spacing:0.16px">mento de punção e higienização de Port</div><div class="t" style="left:183px;top:277.84px;font-size:12px;color:#222;letter-spacing:0.16px">Cath</div><div class="a" style="left:421px;top:230px;width:270px;height:90px;border:1px solid #a0a0a0;border-right-color:#fff;border-bottom-color:#fff"></div><div class="a" style="left:422px;top:231px;width:268px;height:88px;border:1px solid #fff;border-right-color:#a0a0a0;border-bottom-color:#a0a0a0"></div><div class="a" style="left:426px;top:224px;width:72px;height:10px;background:#eeeeee"></div><div class="t b" style="left:428px;top:225.84px;font-size:12px;color:#222;letter-spacing:-0.12px">Profissional</div><div class="a" style="left:425px;top:241px;width:262px;height:75px;background:#fff;border:1px solid #a0a0a0;border-right-color:#c8c8c8;border-bottom-color:#c8c8c8"></div><div class="a" style="left:698px;top:271px;width:74px;height:20px;background:linear-gradient(#f2f6fb,#e2eaf4 35%,#c3d5ea);border-top:2px solid #fff;border-left:2px solid #fff;border-right:2px solid #7a7a7a;border-bottom:2px solid #7a7a7a"></div><div class="t b" style="left:698px;top:275.44px;width:74px;text-align:center;font-size:12px;color:#222;letter-spacing:-0.12px">Selecionar</div><div class="a" style="left:698px;top:298px;width:74px;height:20px;background:linear-gradient(#f2f6fb,#e2eaf4 35%,#c3d5ea);border-top:2px solid #fff;border-left:2px solid #fff;border-right:2px solid #7a7a7a;border-bottom:2px solid #7a7a7a"></div><div class="t b" style="left:698px;top:302.44px;width:74px;text-align:center;font-size:12px;color:#222;letter-spacing:-0.12px">Limpar</div><div class="a" style="left:168px;top:329px;width:1181px;height:347px;border:1px solid #a0a0a0;border-right-color:#fff;border-bottom-color:#fff"></div><div class="a" style="left:169px;top:330px;width:1179px;height:345px;border:1px solid #fff;border-right-color:#a0a0a0;border-bottom-color:#a0a0a0"></div><div class="a" style="left:172px;top:337px;width:1174px;height:336px;border:1px solid #a0a0a0;border-right-color:#fff;border-bottom-color:#fff"></div><div class="a" style="left:173px;top:338px;width:1172px;height:334px;border:1px solid #fff;border-right-color:#a0a0a0;border-bottom-color:#a0a0a0"></div><div class="a" style="left:177px;top:332px;width:125px;height:10px;background:#eeeeee"></div><div class="t b" style="left:179px;top:333.69px;font-size:11px;color:#222;letter-spacing:0.25px">Resultado da Pesquisa</div><div class="a" style="left:176px;top:348px;width:1166px;height:284px;background:#fff;border-left:1px solid #a0a0a0;border-bottom:1px solid #a0a0a0"></div><div class="a" style="left:176px;top:348px;width:1166px;height:19px;background:#235b91;border-top:1px solid #3aa3f2;border-bottom:1px solid #0b2540"></div><div class="a" style="left:176px;top:349px;width:1px;height:17px;background:#3aa3f2"></div><div class="t b" style="left:177px;top:351.84px;width:52px;text-align:center;font-size:12px;color:#fff;letter-spacing:-0.12px">Furo</div><div class="a" style="left:228px;top:348px;width:1px;height:19px;background:#0b2540"></div><div class="a" style="left:229px;top:349px;width:1px;height:17px;background:#3aa3f2"></div><div class="t b" style="left:229px;top:351.84px;width:51px;text-align:center;font-size:12px;color:#fff;letter-spacing:-0.12px">Folga</div><div class="a" style="left:279px;top:348px;width:1px;height:19px;background:#0b2540"></div><div class="a" style="left:280px;top:349px;width:1px;height:17px;background:#3aa3f2"></div><div class="t b" style="left:284px;top:351.84px;font-size:12px;color:#fff;letter-spacing:-0.12px">Liberação</div><div class="a" style="left:345px;top:348px;width:1px;height:19px;background:#0b2540"></div><div class="a" style="left:346px;top:349px;width:1px;height:17px;background:#3aa3f2"></div><div class="t b" style="left:346px;top:351.84px;width:99px;text-align:center;font-size:12px;color:#fff;letter-spacing:-0.12px">Cplex.</div><div class="a" style="left:444px;top:348px;width:1px;height:19px;background:#0b2540"></div><div class="a" style="left:445px;top:349px;width:1px;height:17px;background:#3aa3f2"></div><div class="t b" style="left:449px;top:351.84px;font-size:12px;color:#fff;letter-spacing:-0.12px">Designação</div><div class="a" style="left:518px;top:348px;width:1px;height:19px;background:#0b2540"></div><div class="a" style="left:519px;top:349px;width:1px;height:17px;background:#3aa3f2"></div><div class="t b" style="left:519px;top:351.84px;width:115px;text-align:center;font-size:12px;color:#fff;letter-spacing:-0.12px">Regime Enf.</div><div class="a" style="left:633px;top:348px;width:1px;height:19px;background:#0b2540"></div><div class="a" style="left:634px;top:349px;width:1px;height:17px;background:#3aa3f2"></div><div class="t b" style="left:634px;top:351.84px;width:123px;text-align:center;font-size:12px;color:#fff;letter-spacing:-0.12px">T0 Programado</div><div class="a" style="left:756px;top:348px;width:1px;height:19px;background:#0b2540"></div><div class="a" style="left:757px;top:349px;width:1px;height:17px;background:#3aa3f2"></div><div class="t b" style="left:757px;top:351.84px;width:125px;text-align:center;font-size:12px;color:#fff;letter-spacing:-0.12px">TF Programado</div><div class="a" style="left:881px;top:348px;width:1px;height:19px;background:#0b2540"></div><div class="a" style="left:882px;top:349px;width:1px;height:17px;background:#3aa3f2"></div><div class="t b" style="left:882px;top:351.84px;width:83px;text-align:center;font-size:12px;color:#fff;letter-spacing:-0.12px">Qtde Horas</div><div class="a" style="left:964px;top:348px;width:1px;height:19px;background:#0b2540"></div><div class="a" style="left:965px;top:349px;width:1px;height:17px;background:#3aa3f2"></div><div class="t b" style="left:965px;top:351.84px;width:195px;text-align:center;font-size:12px;color:#fff;letter-spacing:-0.12px">Profissional</div><div class="a" style="left:1159px;top:348px;width:1px;height:19px;background:#0b2540"></div><div class="a" style="left:1160px;top:349px;width:1px;height:17px;background:#3aa3f2"></div><div class="t b" style="left:1160px;top:351.84px;width:200px;text-align:center;font-size:12px;color:#fff;letter-spacing:-0.12px">Cooperativa</div><div class="a" style="left:634px;top:443px;width:247px;height:18px;background:#ffff00"></div><div class="a" style="left:178px;top:385px;width:1164px;height:1px;background:#7d8c9c"></div><div class="a" style="left:178px;top:404px;width:1164px;height:1px;background:#7d8c9c"></div><div class="a" style="left:178px;top:423px;width:1164px;height:1px;background:#7d8c9c"></div><div class="a" style="left:178px;top:442px;width:1164px;height:1px;background:#7d8c9c"></div><div class="a" style="left:178px;top:461px;width:1164px;height:1px;background:#7d8c9c"></div><div class="a" style="left:178px;top:480px;width:1164px;height:1px;background:#7d8c9c"></div><div class="a" style="left:178px;top:499px;width:1164px;height:1px;background:#7d8c9c"></div><div class="a" style="left:178px;top:518px;width:1164px;height:1px;background:#7d8c9c"></div><div class="a" style="left:178px;top:537px;width:1164px;height:1px;background:#7d8c9c"></div><div class="a" style="left:178px;top:556px;width:1164px;height:1px;background:#7d8c9c"></div><div class="a" style="left:178px;top:575px;width:1164px;height:1px;background:#7d8c9c"></div><div class="a" style="left:178px;top:594px;width:1164px;height:1px;background:#7d8c9c"></div><div class="a" style="left:178px;top:613px;width:1164px;height:1px;background:#7d8c9c"></div><div class="a" style="left:228px;top:369px;width:1px;height:262px;background:#7d8c9c"></div><div class="a" style="left:279px;top:369px;width:1px;height:262px;background:#7d8c9c"></div><div class="a" style="left:345px;top:369px;width:1px;height:262px;background:#7d8c9c"></div><div class="a" style="left:444px;top:369px;width:1px;height:262px;background:#7d8c9c"></div><div class="a" style="left:518px;top:369px;width:1px;height:262px;background:#7d8c9c"></div><div class="a" style="left:633px;top:369px;width:1px;height:262px;background:#7d8c9c"></div><div class="a" style="left:756px;top:369px;width:1px;height:262px;background:#7d8c9c"></div><div class="a" style="left:881px;top:369px;width:1px;height:262px;background:#7d8c9c"></div><div class="a" style="left:964px;top:369px;width:1px;height:262px;background:#7d8c9c"></div><div class="a" style="left:1159px;top:369px;width:1px;height:262px;background:#7d8c9c"></div><div class="t" style="left:283px;top:370.84px;font-size:12px;color:#222;letter-spacing:0.14px">Não</div><div class="t" style="left:349px;top:370.84px;font-size:12px;color:#222;letter-spacing:0.14px">Enf.12hs Outra...</div><div class="t" style="left:448px;top:370.84px;font-size:12px;color:#222;letter-spacing:0.14px">Qua-Noite</div><div class="t" style="left:522px;top:370.84px;font-size:12px;color:#222;letter-spacing:0.14px">24 h</div><div class="t" style="left:634px;width:119px;top:370.84px;text-align:right;font-size:12px;color:#222;letter-spacing:0.14px">25/01/2017 19:00</div><div class="t" style="left:756px;width:122px;top:370.84px;text-align:right;font-size:12px;color:#222;letter-spacing:0.14px">26/01/2017 07:00</div><div class="t" style="left:881px;width:80px;top:370.84px;text-align:right;font-size:12px;color:#222;letter-spacing:0.14px">12</div><div class="t" style="left:283px;top:389.84px;font-size:12px;color:#222;letter-spacing:0.14px">Não</div><div class="t" style="left:349px;top:389.84px;font-size:12px;color:#222;letter-spacing:0.14px">Enf.12hs Outra...</div><div class="t" style="left:448px;top:389.84px;font-size:12px;color:#222;letter-spacing:0.14px">Qui-Dia</div><div class="t" style="left:522px;top:389.84px;font-size:12px;color:#222;letter-spacing:0.14px">24 h</div><div class="t" style="left:634px;width:119px;top:389.84px;text-align:right;font-size:12px;color:#222;letter-spacing:0.14px">26/01/2017 07:00</div><div class="t" style="left:756px;width:122px;top:389.84px;text-align:right;font-size:12px;color:#222;letter-spacing:0.14px">26/01/2017 19:00</div><div class="t" style="left:881px;width:80px;top:389.84px;text-align:right;font-size:12px;color:#222;letter-spacing:0.14px">12</div><div class="t" style="left:283px;top:408.84px;font-size:12px;color:#222;letter-spacing:0.14px">Não</div><div class="t" style="left:349px;top:408.84px;font-size:12px;color:#222;letter-spacing:0.14px">Enf.12hs Outra...</div><div class="t" style="left:448px;top:408.84px;font-size:12px;color:#222;letter-spacing:0.14px">Qui-Noite</div><div class="t" style="left:522px;top:408.84px;font-size:12px;color:#222;letter-spacing:0.14px">24 h</div><div class="t" style="left:634px;width:119px;top:408.84px;text-align:right;font-size:12px;color:#222;letter-spacing:0.14px">26/01/2017 19:00</div><div class="t" style="left:756px;width:122px;top:408.84px;text-align:right;font-size:12px;color:#222;letter-spacing:0.14px">27/01/2017 07:00</div><div class="t" style="left:881px;width:80px;top:408.84px;text-align:right;font-size:12px;color:#222;letter-spacing:0.14px">12</div><div class="t" style="left:283px;top:427.84px;font-size:12px;color:#222;letter-spacing:0.14px">Não</div><div class="t" style="left:349px;top:427.84px;font-size:12px;color:#222;letter-spacing:0.14px">Enf.12hs Outra...</div><div class="t" style="left:448px;top:427.84px;font-size:12px;color:#222;letter-spacing:0.14px">Sex-Dia</div><div class="t" style="left:522px;top:427.84px;font-size:12px;color:#222;letter-spacing:0.14px">24 h</div><div class="t" style="left:634px;width:119px;top:427.84px;text-align:right;font-size:12px;color:#222;letter-spacing:0.14px">27/01/2017 07:00</div><div class="t" style="left:756px;width:122px;top:427.84px;text-align:right;font-size:12px;color:#222;letter-spacing:0.14px">27/01/2017 19:00</div><div class="t" style="left:881px;width:80px;top:427.84px;text-align:right;font-size:12px;color:#222;letter-spacing:0.14px">12</div><div class="t" style="left:283px;top:446.84px;font-size:12px;color:#222;letter-spacing:0.14px">Não</div><div class="t" style="left:349px;top:446.84px;font-size:12px;color:#222;letter-spacing:0.14px">Enf.12hs Outra...</div><div class="t" style="left:448px;top:446.84px;font-size:12px;color:#222;letter-spacing:0.14px">Sex-Dia</div><div class="t" style="left:522px;top:446.84px;font-size:12px;color:#222;letter-spacing:0.14px">24 h</div><div class="t" style="left:634px;width:119px;top:446.84px;text-align:right;font-size:12px;color:#222;letter-spacing:0.14px">27/01/2017 07:00</div><div class="t" style="left:756px;width:122px;top:446.84px;text-align:right;font-size:12px;color:#222;letter-spacing:0.14px">27/01/2017 19:00</div><div class="t" style="left:881px;width:80px;top:446.84px;text-align:right;font-size:12px;color:#222;letter-spacing:0.14px">12</div><div class="t" style="left:283px;top:465.84px;font-size:12px;color:#222;letter-spacing:0.14px">Não</div><div class="t" style="left:349px;top:465.84px;font-size:12px;color:#222;letter-spacing:0.14px">Enf.12hs Outra...</div><div class="t" style="left:448px;top:465.84px;font-size:12px;color:#222;letter-spacing:0.14px">Sex-Noite</div><div class="t" style="left:522px;top:465.84px;font-size:12px;color:#222;letter-spacing:0.14px">24 h</div><div class="t" style="left:634px;width:119px;top:465.84px;text-align:right;font-size:12px;color:#222;letter-spacing:0.14px">27/01/2017 19:00</div><div class="t" style="left:756px;width:122px;top:465.84px;text-align:right;font-size:12px;color:#222;letter-spacing:0.14px">28/01/2017 07:00</div><div class="t" style="left:881px;width:80px;top:465.84px;text-align:right;font-size:12px;color:#222;letter-spacing:0.14px">12</div><div class="t" style="left:283px;top:484.84px;font-size:12px;color:#222;letter-spacing:0.14px">Não</div><div class="t" style="left:349px;top:484.84px;font-size:12px;color:#222;letter-spacing:0.14px">Enf.12hs Outra...</div><div class="t" style="left:448px;top:484.84px;font-size:12px;color:#222;letter-spacing:0.14px">Sab-Dia</div><div class="t" style="left:522px;top:484.84px;font-size:12px;color:#222;letter-spacing:0.14px">24 h</div><div class="t" style="left:634px;width:119px;top:484.84px;text-align:right;font-size:12px;color:#222;letter-spacing:0.14px">28/01/2017 07:00</div><div class="t" style="left:756px;width:122px;top:484.84px;text-align:right;font-size:12px;color:#222;letter-spacing:0.14px">28/01/2017 19:00</div><div class="t" style="left:881px;width:80px;top:484.84px;text-align:right;font-size:12px;color:#222;letter-spacing:0.14px">12</div><div class="t" style="left:283px;top:503.84px;font-size:12px;color:#222;letter-spacing:0.14px">Não</div><div class="t" style="left:349px;top:503.84px;font-size:12px;color:#222;letter-spacing:0.14px">Enf.12hs Outra...</div><div class="t" style="left:448px;top:503.84px;font-size:12px;color:#222;letter-spacing:0.14px">Sab-Noite</div><div class="t" style="left:522px;top:503.84px;font-size:12px;color:#222;letter-spacing:0.14px">24 h</div><div class="t" style="left:634px;width:119px;top:503.84px;text-align:right;font-size:12px;color:#222;letter-spacing:0.14px">28/01/2017 19:00</div><div class="t" style="left:756px;width:122px;top:503.84px;text-align:right;font-size:12px;color:#222;letter-spacing:0.14px">29/01/2017 07:00</div><div class="t" style="left:881px;width:80px;top:503.84px;text-align:right;font-size:12px;color:#222;letter-spacing:0.14px">12</div><div class="t" style="left:283px;top:522.84px;font-size:12px;color:#222;letter-spacing:0.14px">Não</div><div class="t" style="left:349px;top:522.84px;font-size:12px;color:#222;letter-spacing:0.14px">Enf.12hs Outra...</div><div class="t" style="left:448px;top:522.84px;font-size:12px;color:#222;letter-spacing:0.14px">Dom-Dia</div><div class="t" style="left:522px;top:522.84px;font-size:12px;color:#222;letter-spacing:0.14px">24 h</div><div class="t" style="left:634px;width:119px;top:522.84px;text-align:right;font-size:12px;color:#222;letter-spacing:0.14px">29/01/2017 07:00</div><div class="t" style="left:756px;width:122px;top:522.84px;text-align:right;font-size:12px;color:#222;letter-spacing:0.14px">29/01/2017 19:00</div><div class="t" style="left:881px;width:80px;top:522.84px;text-align:right;font-size:12px;color:#222;letter-spacing:0.14px">12</div><div class="t" style="left:283px;top:541.84px;font-size:12px;color:#222;letter-spacing:0.14px">Não</div><div class="t" style="left:349px;top:541.84px;font-size:12px;color:#222;letter-spacing:0.14px">Enf.12hs Outra...</div><div class="t" style="left:448px;top:541.84px;font-size:12px;color:#222;letter-spacing:0.14px">Dom-Noite</div><div class="t" style="left:522px;top:541.84px;font-size:12px;color:#222;letter-spacing:0.14px">24 h</div><div class="t" style="left:634px;width:119px;top:541.84px;text-align:right;font-size:12px;color:#222;letter-spacing:0.14px">29/01/2017 19:00</div><div class="t" style="left:756px;width:122px;top:541.84px;text-align:right;font-size:12px;color:#222;letter-spacing:0.14px">30/01/2017 07:00</div><div class="t" style="left:881px;width:80px;top:541.84px;text-align:right;font-size:12px;color:#222;letter-spacing:0.14px">12</div><div class="t" style="left:283px;top:560.84px;font-size:12px;color:#222;letter-spacing:0.14px">Não</div><div class="t" style="left:349px;top:560.84px;font-size:12px;color:#222;letter-spacing:0.14px">Enf.12hs Outra...</div><div class="t" style="left:448px;top:560.84px;font-size:12px;color:#222;letter-spacing:0.14px">Seg-Dia</div><div class="t" style="left:522px;top:560.84px;font-size:12px;color:#222;letter-spacing:0.14px">24 h</div><div class="t" style="left:634px;width:119px;top:560.84px;text-align:right;font-size:12px;color:#222;letter-spacing:0.14px">30/01/2017 07:00</div><div class="t" style="left:756px;width:122px;top:560.84px;text-align:right;font-size:12px;color:#222;letter-spacing:0.14px">30/01/2017 19:00</div><div class="t" style="left:881px;width:80px;top:560.84px;text-align:right;font-size:12px;color:#222;letter-spacing:0.14px">12</div><div class="t" style="left:283px;top:579.84px;font-size:12px;color:#222;letter-spacing:0.14px">Não</div><div class="t" style="left:349px;top:579.84px;font-size:12px;color:#222;letter-spacing:0.14px">Enf.12hs Outra...</div><div class="t" style="left:448px;top:579.84px;font-size:12px;color:#222;letter-spacing:0.14px">Seg-Noite</div><div class="t" style="left:522px;top:579.84px;font-size:12px;color:#222;letter-spacing:0.14px">24 h</div><div class="t" style="left:634px;width:119px;top:579.84px;text-align:right;font-size:12px;color:#222;letter-spacing:0.14px">30/01/2017 19:00</div><div class="t" style="left:756px;width:122px;top:579.84px;text-align:right;font-size:12px;color:#222;letter-spacing:0.14px">31/01/2017 07:00</div><div class="t" style="left:881px;width:80px;top:579.84px;text-align:right;font-size:12px;color:#222;letter-spacing:0.14px">12</div><div class="t" style="left:283px;top:598.84px;font-size:12px;color:#222;letter-spacing:0.14px">Não</div><div class="t" style="left:349px;top:598.84px;font-size:12px;color:#222;letter-spacing:0.14px">Enf.12hs Outra...</div><div class="t" style="left:448px;top:598.84px;font-size:12px;color:#222;letter-spacing:0.14px">Ter-Dia</div><div class="t" style="left:522px;top:598.84px;font-size:12px;color:#222;letter-spacing:0.14px">24 h</div><div class="t" style="left:634px;width:119px;top:598.84px;text-align:right;font-size:12px;color:#222;letter-spacing:0.14px">31/01/2017 07:00</div><div class="t" style="left:756px;width:122px;top:598.84px;text-align:right;font-size:12px;color:#222;letter-spacing:0.14px">31/01/2017 19:00</div><div class="t" style="left:881px;width:80px;top:598.84px;text-align:right;font-size:12px;color:#222;letter-spacing:0.14px">12</div><div class="t" style="left:283px;top:617.84px;font-size:12px;color:#222;letter-spacing:0.14px">Não</div><div class="t" style="left:349px;top:617.84px;font-size:12px;color:#222;letter-spacing:0.14px">Enf.12hs Outra...</div><div class="t" style="left:448px;top:617.84px;font-size:12px;color:#222;letter-spacing:0.14px">Ter-Noite</div><div class="t" style="left:522px;top:617.84px;font-size:12px;color:#222;letter-spacing:0.14px">24 h</div><div class="t" style="left:634px;width:119px;top:617.84px;text-align:right;font-size:12px;color:#222;letter-spacing:0.14px">31/01/2017 19:00</div><div class="t" style="left:756px;width:122px;top:617.84px;text-align:right;font-size:12px;color:#222;letter-spacing:0.14px">01/02/2017 07:00</div><div class="t" style="left:881px;width:80px;top:617.84px;text-align:right;font-size:12px;color:#222;letter-spacing:0.14px">12</div><div class="a" style="left:176px;top:653px;width:1166px;height:16px;background:#eeeeee;border-top:1px solid #8a9ab0;border-left:1px solid #8a9ab0;border-bottom:1px solid #8a9ab0"></div><div class="a" style="left:177px;top:654px;width:15px;height:15px;background:#eeeeee;border:1px solid #b8b8b8;box-shadow:inset 1px 1px 0 #fff"></div><svg class="a" style="left:0;top:0;overflow:visible" width="1" height="1"><polygon points="186.5,657.5 186.5,665.5 182.5,661.5" fill="#333"/></svg><div class="a" style="left:191px;top:653px;width:232px;height:16px;background:linear-gradient(#f8fbff,#dce7f4 50%,#c8d9ee);border:1px solid #6a8ac5"></div><svg class="a" style="left:303px;top:657px" width="8" height="10" shape-rendering="crispEdges"><path d="M1 0v8M3 0v8M5 0v8" stroke="#7a96c0"/></svg><div class="a" style="left:170px;top:676px;width:1176px;height:40px;border:1px solid #a0a0a0;border-right-color:#fff;border-bottom-color:#fff"></div><div class="a" style="left:171px;top:677px;width:1174px;height:38px;border:1px solid #fff;border-right-color:#a0a0a0;border-bottom-color:#a0a0a0"></div><div class="a" style="left:351px;top:683px;width:70px;height:27px;background:linear-gradient(#f2f6fb,#e2eaf4 35%,#c3d5ea);border-top:2px solid #fff;border-left:2px solid #fff;border-right:2px solid #7a7a7a;border-bottom:2px solid #7a7a7a"></div><div class="t b" style="left:351px;top:690.94px;width:70px;text-align:center;font-size:12px;color:#222;letter-spacing:-0.12px">Pesquisar</div><div class="a" style="left:426px;top:683px;width:80px;height:27px;background:linear-gradient(#f2f6fb,#e2eaf4 35%,#c3d5ea);border-top:2px solid #fff;border-left:2px solid #fff;border-right:2px solid #7a7a7a;border-bottom:2px solid #7a7a7a"></div><div class="t b" style="left:426px;top:690.94px;width:80px;text-align:center;font-size:12px;color:#222;letter-spacing:-0.12px">Instruções</div><div class="a" style="left:511px;top:683px;width:90px;height:27px;background:linear-gradient(#f2f6fb,#e2eaf4 35%,#c3d5ea);border-top:2px solid #fff;border-left:2px solid #fff;border-right:2px solid #7a7a7a;border-bottom:2px solid #7a7a7a"></div><div class="t b" style="left:511px;top:690.94px;width:90px;text-align:center;font-size:12px;color:#222;letter-spacing:-0.12px">Cooperativa</div><div class="a" style="left:606px;top:683px;width:80px;height:27px;background:linear-gradient(#f2f6fb,#e2eaf4 35%,#c3d5ea);border-top:2px solid #fff;border-left:2px solid #fff;border-right:2px solid #7a7a7a;border-bottom:2px solid #7a7a7a"></div><div class="t b" style="left:606px;top:690.94px;width:80px;text-align:center;font-size:12px;color:#222;letter-spacing:-0.12px">Profissional</div><div class="a" style="left:691px;top:683px;width:70px;height:27px;background:linear-gradient(#f2f6fb,#e2eaf4 35%,#c3d5ea);border-top:2px solid #fff;border-left:2px solid #fff;border-right:2px solid #7a7a7a;border-bottom:2px solid #7a7a7a"></div><div class="t b" style="left:691px;top:690.94px;width:70px;text-align:center;font-size:12px;color:#999;letter-spacing:-0.12px">Liberar</div><div class="a" style="left:766px;top:683px;width:90px;height:27px;background:linear-gradient(#f2f6fb,#e2eaf4 35%,#c3d5ea);border-top:2px solid #fff;border-left:2px solid #fff;border-right:2px solid #7a7a7a;border-bottom:2px solid #7a7a7a"></div><div class="t b" style="left:766px;top:690.94px;width:90px;text-align:center;font-size:12px;color:#222;letter-spacing:-0.12px">Gerar Turnos</div><div class="a" style="left:773px;top:688px;width:77px;height:17px;border:1px solid #8aa8d0"></div><div class="a" style="left:861px;top:683px;width:60px;height:27px;background:linear-gradient(#f2f6fb,#e2eaf4 35%,#c3d5ea);border-top:2px solid #fff;border-left:2px solid #fff;border-right:2px solid #7a7a7a;border-bottom:2px solid #7a7a7a"></div><div class="t b" style="left:861px;top:690.94px;width:60px;text-align:center;font-size:12px;color:#222;letter-spacing:-0.12px">Turnos</div><div class="a" style="left:926px;top:683px;width:60px;height:27px;background:linear-gradient(#f2f6fb,#e2eaf4 35%,#c3d5ea);border-top:2px solid #fff;border-left:2px solid #fff;border-right:2px solid #7a7a7a;border-bottom:2px solid #7a7a7a"></div><div class="t b" style="left:926px;top:690.94px;width:60px;text-align:center;font-size:12px;color:#222;letter-spacing:-0.12px">Editar</div><div class="a" style="left:991px;top:683px;width:110px;height:27px;background:linear-gradient(#f2f6fb,#e2eaf4 35%,#c3d5ea);border-top:2px solid #fff;border-left:2px solid #fff;border-right:2px solid #7a7a7a;border-bottom:2px solid #7a7a7a"></div><div class="t b" style="left:991px;top:690.94px;width:110px;text-align:center;font-size:12px;color:#ee0000;letter-spacing:-0.12px">Restrição Ativa</div><div class="a" style="left:1106px;top:683px;width:60px;height:27px;background:linear-gradient(#f2f6fb,#e2eaf4 35%,#c3d5ea);border-top:2px solid #fff;border-left:2px solid #fff;border-right:2px solid #7a7a7a;border-bottom:2px solid #7a7a7a"></div><div class="t b" style="left:1106px;top:690.94px;width:60px;text-align:center;font-size:12px;color:#222;letter-spacing:-0.12px"></div><div class="t b" style="left:1110px;top:690.84px;font-size:12px;color:#222;letter-spacing:-0.12px">H</div><div class="a" style="left:1116px;top:642px;width:238px;height:86px;background:#fff"></div><div class="a" style="left:1116px;top:642px;width:238px;height:25px;background:#ff8c00"></div><div class="a" style="left:1116px;top:721px;width:238px;height:7px;background:#ff8c00"></div><div class="a" style="left:1116px;top:726px;width:238px;height:2px;background:#6586c4"></div><svg class="a" style="left:1116px;top:642px" width="44" height="24" viewBox="0 0 44 24">
<text x="6.5" y="15" font-family="Liberation Sans" font-size="12.5" fill="#fff" stroke="#fff" stroke-width="5" stroke-linejoin="round" letter-spacing="-0.4">skype</text>
<text x="6.5" y="15" font-family="Liberation Sans" font-size="12.5" fill="#ff8c00" letter-spacing="-0.4">skype</text>
</svg><svg class="a" style="left:1124px;top:680px" width="14" height="14" viewBox="0 0 14 14">
<circle cx="7" cy="7" r="6" fill="#6ab023"/><path d="M4 7.2 L6.2 9.2 L10 5" stroke="#fff" stroke-width="1.8" fill="none"/></svg><div class="t" style="left:1143px;top:678.00px;font-size:13px;color:#222;letter-spacing:0.1px">Gilmar Duarte</div><div class="t" style="left:1143px;top:695.84px;font-size:12px;color:#6a7080;letter-spacing:0.1px">está online</div></body></html>
